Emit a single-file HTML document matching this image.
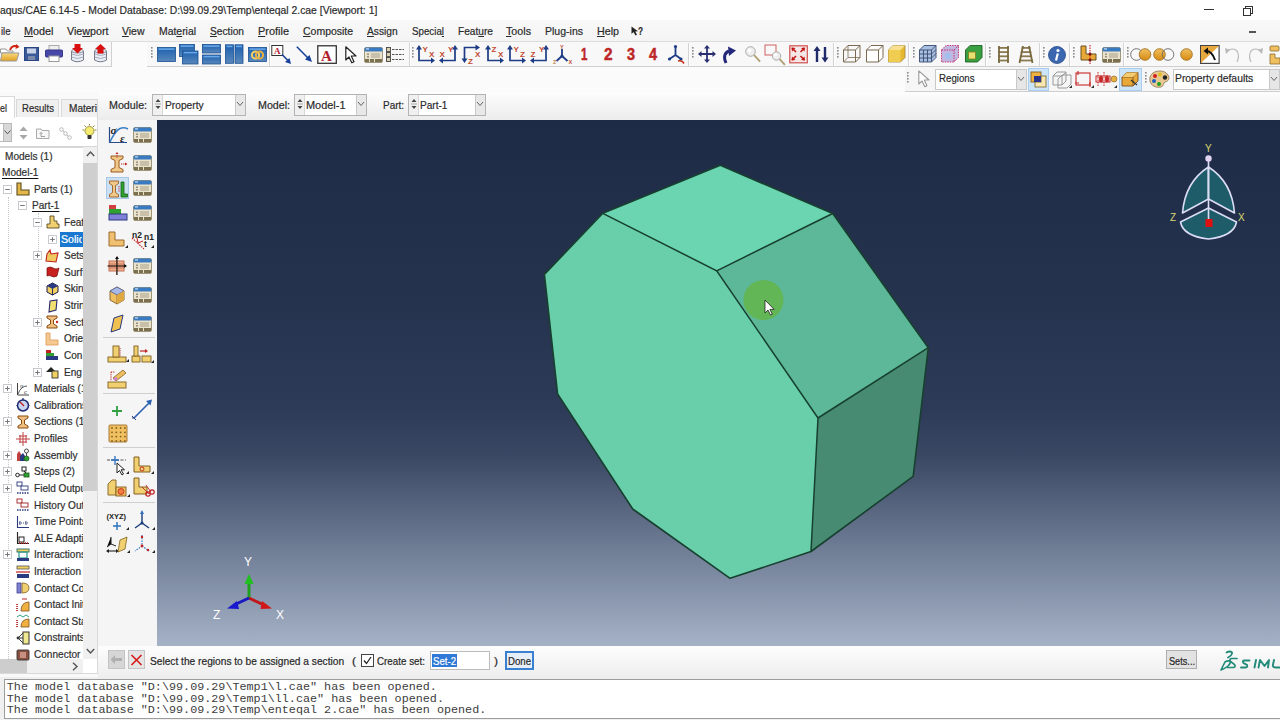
<!DOCTYPE html>
<html><head><meta charset="utf-8">
<style>
*{margin:0;padding:0;box-sizing:border-box}
html,body{width:1280px;height:720px;overflow:hidden;background:#f9f9f9;font-family:"Liberation Sans",sans-serif;font-size:12px;color:#222;position:relative}
.a{position:absolute}
svg.a{overflow:visible}
u{text-decoration:underline;text-underline-offset:0.5px;text-decoration-thickness:1px}
div.a{-webkit-text-stroke:0.2px currentColor}
div.m{-webkit-text-stroke:0}
</style></head><body>
<div class="a" style="left:0px;top:0px;width:1280px;height:21px;background:#fff"></div>
<div class="a" style="left:0.00px;top:3.88px;font-size:11.6px;line-height:11.6px;color:#2a2a2a;font-weight:normal;font-family:'Liberation Sans',sans-serif;white-space:pre;transform:scaleX(0.8956);transform-origin:0 0;">aqus/CAE 6.14-5 - Model Database: D:\99.09.29\Temp\enteqal 2.cae [Viewport: 1]</div>
<div class="a" style="left:1204px;top:9px;width:10px;height:1px;background:#333"></div>
<div class="a" style="left:1245px;top:6px;width:8px;height:8px;border:1px solid #333;background:#fff"></div>
<div class="a" style="left:1243px;top:8px;width:8px;height:8px;border:1px solid #333;background:#fff"></div>
<div class="a" style="left:0px;top:20px;width:1280px;height:21px;background:linear-gradient(#f9f9f9,#f4f4f4)"></div>
<div class="a" style="left:0px;top:41px;width:1280px;height:1px;background:#dcdcdc"></div>
<div class="a" style="left:1249px;top:31px;width:7px;height:1.5px;background:#555"></div>
<div class="a" style="left:0.50px;top:25.86px;font-size:10.8px;line-height:10.8px;color:#2a2a2a;font-weight:normal;font-family:'Liberation Sans',sans-serif;white-space:pre;transform:scaleX(0.8796);transform-origin:0 0;">ile</div>
<div class="a" style="left:24.00px;top:25.86px;font-size:10.8px;line-height:10.8px;color:#2a2a2a;font-weight:normal;font-family:'Liberation Sans',sans-serif;white-space:pre;"><u>M</u>odel</div>
<div class="a" style="left:67.00px;top:25.86px;font-size:10.8px;line-height:10.8px;color:#2a2a2a;font-weight:normal;font-family:'Liberation Sans',sans-serif;white-space:pre;transform:scaleX(0.9916);transform-origin:0 0;">Vie<u>w</u>port</div>
<div class="a" style="left:122.00px;top:25.86px;font-size:10.8px;line-height:10.8px;color:#2a2a2a;font-weight:normal;font-family:'Liberation Sans',sans-serif;white-space:pre;transform:scaleX(0.9690);transform-origin:0 0;"><u>V</u>iew</div>
<div class="a" style="left:159.00px;top:25.86px;font-size:10.8px;line-height:10.8px;color:#2a2a2a;font-weight:normal;font-family:'Liberation Sans',sans-serif;white-space:pre;transform:scaleX(0.9637);transform-origin:0 0;">Mat<u>e</u>rial</div>
<div class="a" style="left:210.00px;top:25.86px;font-size:10.8px;line-height:10.8px;color:#2a2a2a;font-weight:normal;font-family:'Liberation Sans',sans-serif;white-space:pre;transform:scaleX(0.9440);transform-origin:0 0;"><u>S</u>ection</div>
<div class="a" style="left:258.00px;top:25.86px;font-size:10.8px;line-height:10.8px;color:#2a2a2a;font-weight:normal;font-family:'Liberation Sans',sans-serif;white-space:pre;transform:scaleX(1.0125);transform-origin:0 0;"><u>P</u>rofile</div>
<div class="a" style="left:302.80px;top:25.86px;font-size:10.8px;line-height:10.8px;color:#2a2a2a;font-weight:normal;font-family:'Liberation Sans',sans-serif;white-space:pre;transform:scaleX(0.9705);transform-origin:0 0;"><u>C</u>omposite</div>
<div class="a" style="left:367.00px;top:25.86px;font-size:10.8px;line-height:10.8px;color:#2a2a2a;font-weight:normal;font-family:'Liberation Sans',sans-serif;white-space:pre;transform:scaleX(0.9444);transform-origin:0 0;"><u>A</u>ssign</div>
<div class="a" style="left:412.00px;top:25.86px;font-size:10.8px;line-height:10.8px;color:#2a2a2a;font-weight:normal;font-family:'Liberation Sans',sans-serif;white-space:pre;transform:scaleX(0.9033);transform-origin:0 0;">Specia<u>l</u></div>
<div class="a" style="left:458.00px;top:25.86px;font-size:10.8px;line-height:10.8px;color:#2a2a2a;font-weight:normal;font-family:'Liberation Sans',sans-serif;white-space:pre;transform:scaleX(0.9407);transform-origin:0 0;">Feat<u>u</u>re</div>
<div class="a" style="left:506.00px;top:25.86px;font-size:10.8px;line-height:10.8px;color:#2a2a2a;font-weight:normal;font-family:'Liberation Sans',sans-serif;white-space:pre;transform:scaleX(0.9914);transform-origin:0 0;"><u>T</u>ools</div>
<div class="a" style="left:545.00px;top:25.86px;font-size:10.8px;line-height:10.8px;color:#2a2a2a;font-weight:normal;font-family:'Liberation Sans',sans-serif;white-space:pre;transform:scaleX(0.9733);transform-origin:0 0;">Plu<u>g</u>-ins</div>
<div class="a" style="left:597.00px;top:25.86px;font-size:10.8px;line-height:10.8px;color:#2a2a2a;font-weight:normal;font-family:'Liberation Sans',sans-serif;white-space:pre;transform:scaleX(0.9913);transform-origin:0 0;"><u>H</u>elp</div>
<div class="a" style="left:638.00px;top:25.86px;font-size:10.8px;line-height:10.8px;color:#2a2a2a;font-weight:bold;font-family:'Liberation Sans',sans-serif;white-space:pre;transform:scaleX(0.7590);transform-origin:0 0;">?</div>
<svg class="a" style="left:631px;top:26px" width="8" height="10" viewBox="0 0 8 10"><path d="M0.5 0.5 L0.5 8 L2.5 6 L4.5 9.5 L6 8.8 L4.2 5.5 L7 5.3 Z" fill="#222"/></svg>
<div class="a" style="left:0px;top:42px;width:1280px;height:50px;background:#fbfbfb"></div>
<div class="a" style="left:-2px;top:42px;width:114px;height:25px;background:#f8f8f8;border-right:1px solid #d0d0d0;border-bottom:1px solid #cfcfcf"></div>
<div class="a" style="left:147px;top:42px;width:1133px;height:25px;background:#f8f8f8;border-bottom:1px solid #cfcfcf"></div>
<div class="a" style="left:905px;top:67px;width:375px;height:25px;background:#f6f6f6;border-bottom:1px solid #cfcfcf"></div>
<div class="a" style="left:98px;top:92px;width:1182px;height:28px;background:linear-gradient(#fdfdfd,#ececec)"></div>
<div class="a" style="left:109.40px;top:99.86px;font-size:10.8px;line-height:10.8px;color:#2a2a2a;font-weight:normal;font-family:'Liberation Sans',sans-serif;white-space:pre;transform:scaleX(0.9909);transform-origin:0 0;">Module:</div>
<div class="a" style="left:258.00px;top:99.86px;font-size:10.8px;line-height:10.8px;color:#2a2a2a;font-weight:normal;font-family:'Liberation Sans',sans-serif;white-space:pre;transform:scaleX(0.9877);transform-origin:0 0;">Model:</div>
<div class="a" style="left:383.00px;top:99.86px;font-size:10.8px;line-height:10.8px;color:#2a2a2a;font-weight:normal;font-family:'Liberation Sans',sans-serif;white-space:pre;transform:scaleX(0.9215);transform-origin:0 0;">Part:</div>
<div class="a" style="left:152px;top:94px;width:94px;height:22px;background:#fff;border:1px solid #b4b4b4"></div>
<div class="a" style="left:153px;top:95px;width:10px;height:20px;background:#f0f0f0;border-right:1px solid #d8d8d8"></div>
<svg class="a" style="left:155px;top:98px" width="6" height="12" viewBox="0 0 6 12"><path d="M0.5 4 L3 1 L5.5 4 Z M0.5 8 L3 11 L5.5 8 Z" fill="#444"/><line x1="0" y1="6" x2="6" y2="6" stroke="#aaa" stroke-width="1"/></svg>
<div class="a" style="left:235px;top:95px;width:10px;height:20px;background:#e8e8e8;border-left:1px solid #c8c8c8"></div>
<svg class="a" style="left:236px;top:101px" width="8" height="6" viewBox="0 0 8 6"><path d="M1 1 L4 4.5 L7 1" fill="none" stroke="#666" stroke-width="1"/></svg>
<div class="a" style="left:165.00px;top:99.52px;font-size:11.2px;line-height:11.2px;color:#2a2a2a;font-weight:normal;font-family:'Liberation Sans',sans-serif;white-space:pre;transform:scaleX(0.9141);transform-origin:0 0;">Property</div>
<div class="a" style="left:294px;top:94px;width:73px;height:22px;background:#fff;border:1px solid #b4b4b4"></div>
<div class="a" style="left:295px;top:95px;width:10px;height:20px;background:#f0f0f0;border-right:1px solid #d8d8d8"></div>
<svg class="a" style="left:297px;top:98px" width="6" height="12" viewBox="0 0 6 12"><path d="M0.5 4 L3 1 L5.5 4 Z M0.5 8 L3 11 L5.5 8 Z" fill="#444"/><line x1="0" y1="6" x2="6" y2="6" stroke="#aaa" stroke-width="1"/></svg>
<div class="a" style="left:356px;top:95px;width:10px;height:20px;background:#e8e8e8;border-left:1px solid #c8c8c8"></div>
<svg class="a" style="left:357px;top:101px" width="8" height="6" viewBox="0 0 8 6"><path d="M1 1 L4 4.5 L7 1" fill="none" stroke="#666" stroke-width="1"/></svg>
<div class="a" style="left:306.00px;top:99.52px;font-size:11.2px;line-height:11.2px;color:#2a2a2a;font-weight:normal;font-family:'Liberation Sans',sans-serif;white-space:pre;transform:scaleX(0.9781);transform-origin:0 0;">Model-1</div>
<div class="a" style="left:408px;top:94px;width:78px;height:22px;background:#fff;border:1px solid #b4b4b4"></div>
<div class="a" style="left:409px;top:95px;width:10px;height:20px;background:#f0f0f0;border-right:1px solid #d8d8d8"></div>
<svg class="a" style="left:411px;top:98px" width="6" height="12" viewBox="0 0 6 12"><path d="M0.5 4 L3 1 L5.5 4 Z M0.5 8 L3 11 L5.5 8 Z" fill="#444"/><line x1="0" y1="6" x2="6" y2="6" stroke="#aaa" stroke-width="1"/></svg>
<div class="a" style="left:475px;top:95px;width:10px;height:20px;background:#e8e8e8;border-left:1px solid #c8c8c8"></div>
<svg class="a" style="left:476px;top:101px" width="8" height="6" viewBox="0 0 8 6"><path d="M1 1 L4 4.5 L7 1" fill="none" stroke="#666" stroke-width="1"/></svg>
<div class="a" style="left:420.00px;top:99.52px;font-size:11.2px;line-height:11.2px;color:#2a2a2a;font-weight:normal;font-family:'Liberation Sans',sans-serif;white-space:pre;transform:scaleX(0.9010);transform-origin:0 0;">Part-1</div>
<div class="a" style="left:157px;top:120px;width:1123px;height:526px;background:linear-gradient(to bottom,#1e2b47 0%,#25334f 35%,#2d3b58 55%,#3a4864 64%,#6a7891 80%,#a5b2c6 100%)"></div>
<div class="a" style="left:0px;top:117px;width:98px;height:557px;background:#fff;border-right:1px solid #d9d9d9;border-bottom:1px solid #d9d9d9"></div>
<div class="a" style="left:16px;top:99px;width:43px;height:18px;background:#f0f0f0;border:1px solid #d9d9d9;border-bottom:none"></div>
<div class="a" style="left:61px;top:99px;width:37px;height:18px;background:#f0f0f0;border:1px solid #d9d9d9;border-bottom:none"></div>
<div class="a" style="left:-2px;top:96px;width:17px;height:22px;background:#fff;border:1px solid #d9d9d9;border-bottom:none"></div>
<div class="a" style="left:0.00px;top:102.52px;font-size:11.2px;line-height:11.2px;color:#2a2a2a;font-weight:normal;font-family:'Liberation Sans',sans-serif;white-space:pre;transform:scaleX(0.8013);transform-origin:0 0;">el</div>
<div class="a" style="left:22.00px;top:102.52px;font-size:11.2px;line-height:11.2px;color:#2a2a2a;font-weight:normal;font-family:'Liberation Sans',sans-serif;white-space:pre;transform:scaleX(0.8567);transform-origin:0 0;">Results</div>
<div class="a" style="left:69.00px;top:102.52px;font-size:11.2px;line-height:11.2px;color:#2a2a2a;font-weight:normal;font-family:'Liberation Sans',sans-serif;white-space:pre;transform:scaleX(0.8993);transform-origin:0 0;">Materi</div>
<div class="a" style="left:99px;top:120px;width:58px;height:526px;background:#f3f3f3"></div>
<div class="a" style="left:99px;top:646px;width:1181px;height:33px;background:#f3f3f3"></div>
<div class="a" style="left:0px;top:677px;width:1280px;height:43px;background:#f0f0f0"></div>
<div class="a" style="left:4px;top:679px;width:1276px;height:40px;background:#fff;border:1px solid #9c9c9c;border-right:none"></div>
<div class="a m" style="left:6.80px;top:682.29px;font-size:11.75px;line-height:11.75px;color:#3c3c3c;font-weight:normal;font-family:'Liberation Mono',monospace;white-space:pre;">The model database "D:\99.09.29\Temp1\l.cae" has been opened.</div>
<div class="a m" style="left:6.80px;top:693.89px;font-size:11.75px;line-height:11.75px;color:#3c3c3c;font-weight:normal;font-family:'Liberation Mono',monospace;white-space:pre;">The model database "D:\99.09.29\Temp1\ll.cae" has been opened.</div>
<div class="a m" style="left:6.80px;top:705.09px;font-size:11.75px;line-height:11.75px;color:#3c3c3c;font-weight:normal;font-family:'Liberation Mono',monospace;white-space:pre;">The model database "D:\99.09.29\Temp\enteqal 2.cae" has been opened.</div>
<svg class="a" style="left:157px;top:120px" width="1123" height="526" viewBox="0 0 1123 526"><polygon points="445.8,93.3 563.3,45.3 675.7,93.5 559.7,150.8" fill="#6bd5b1"/><polygon points="559.7,150.8 675.7,93.5 771.3,227.7 661.0,298.0" fill="#5db899"/><polygon points="661.0,298.0 771.3,227.7 756.2,356.4 654.0,431.5" fill="#478b72"/><polygon points="445.8,93.3 559.7,150.8 661.0,298.0 654.0,431.5 573.1,458.3 475.7,389.0 400.6,274.0 387.4,154.4" fill="#68cfaa"/><polyline points="387.4,154.4 445.8,93.3 563.3,45.3 675.7,93.5 771.3,227.7 756.2,356.4 654.0,431.5 573.1,458.3 475.7,389.0 400.6,274.0 387.4,154.4" fill="none" stroke="#17402f" stroke-width="1.6" stroke-linejoin="round"/><polyline points="445.8,93.3 559.7,150.8 661.0,298.0 654.0,431.5" fill="none" stroke="#17402f" stroke-width="1.5"/><line x1="559.7" y1="150.8" x2="675.7" y2="93.5" stroke="#17402f" stroke-width="1.5"/><line x1="661" y1="298" x2="771.3" y2="227.7" stroke="#17402f" stroke-width="1.5"/><circle cx="606.5" cy="180" r="20" fill="#64b54f" opacity="0.92"/><path d="M608 180 l0 13 l3 -3 l2.5 5 l1.8 -0.8 l-2.4 -4.8 l4.2 0 z" fill="#fff" stroke="#222" stroke-width="0.8"/></svg>
<svg class="a" style="left:0px;top:0px" width="1" height="1" viewBox="0 0 1 1"><defs><linearGradient id="bw" x1="0" y1="0" x2="0" y2="1"><stop offset="0" stop-color="#1b5fae"/><stop offset="1" stop-color="#5a88bb"/></linearGradient><linearGradient id="yel" x1="0" y1="0" x2="0" y2="1"><stop offset="0" stop-color="#f7d980"/><stop offset="1" stop-color="#e0a020"/></linearGradient><linearGradient id="org" x1="0" y1="0" x2="0" y2="1"><stop offset="0" stop-color="#f0c060"/><stop offset="1" stop-color="#d88a10"/></linearGradient></defs></svg>
<svg class="a" style="left:0px;top:44px" width="20" height="18" viewBox="0 0 20 18"><path d="M0.5 5 L6 5 L7.5 7 L13 7 L13 9 L0.5 9 Z" fill="#fff" stroke="#999" stroke-width="1"/><path d="M2 9 L19 9 L16.5 17 L0.5 17 Z" fill="url(#yel)" stroke="#9a9a9a" stroke-width="1"/><path d="M10 6 Q12 0.5 18 2.5" fill="none" stroke="#d02010" stroke-width="1.8"/><path d="M16 0 L19.5 3 L15.5 5 Z" fill="#d02010"/></svg>
<svg class="a" style="left:24px;top:47px" width="15" height="14" viewBox="0 0 15 14"><rect x="0.5" y="0.5" width="14" height="13" fill="#3a5a98" stroke="#2a4682"/><rect x="3" y="1.5" width="9" height="5" fill="#c8d4e6"/><rect x="4" y="9" width="7" height="4" fill="#7a8aa8"/></svg>
<svg class="a" style="left:45px;top:45px" width="18" height="17" viewBox="0 0 18 17"><rect x="4" y="0.5" width="10" height="5" fill="#eee" stroke="#aaa"/><rect x="0.5" y="5" width="17" height="7" rx="1" fill="#4848a8" stroke="#36368a"/><rect x="4" y="11" width="10" height="5.5" fill="#fff" stroke="#999"/></svg>
<svg class="a" style="left:71px;top:44px" width="14" height="19" viewBox="0 0 14 19"><path d="M0.5 7 L0.5 16 Q6.5 19.5 12.5 16 L12.5 7" fill="#e8eef5" stroke="#778" stroke-width="1"/><path d="M0.5 10 Q6.5 13 12.5 10 M0.5 13 Q6.5 16 12.5 13" fill="none" stroke="#99a" stroke-width="0.8"/><ellipse cx="6.5" cy="7" rx="6" ry="2" fill="#dfe6ee" stroke="#778" stroke-width="0.8"/><path d="M3.5 0 L9.5 0 L9.5 4 L12 4 L6.5 9.5 L1 4 L3.5 4 Z" fill="#d81010"/></svg>
<svg class="a" style="left:94px;top:44px" width="14" height="19" viewBox="0 0 14 19"><path d="M0.5 7 L0.5 16 Q6.5 19.5 12.5 16 L12.5 7" fill="#e8eef5" stroke="#778" stroke-width="1"/><path d="M0.5 10 Q6.5 13 12.5 10 M0.5 13 Q6.5 16 12.5 13" fill="none" stroke="#99a" stroke-width="0.8"/><ellipse cx="6.5" cy="7" rx="6" ry="2" fill="#dfe6ee" stroke="#778" stroke-width="0.8"/><path d="M6.5 0 L12 5 L9.5 5 L9.5 9.5 L3.5 9.5 L3.5 5 L1 5 Z" fill="#d81010"/></svg>
<svg class="a" style="left:151px;top:47px" width="2" height="12" viewBox="0 0 2 12"><rect x="0" y="0" width="1.6" height="1.6" fill="#8a8a8a"/><rect x="0" y="3" width="1.6" height="1.6" fill="#8a8a8a"/><rect x="0" y="6" width="1.6" height="1.6" fill="#8a8a8a"/><rect x="0" y="9" width="1.6" height="1.6" fill="#8a8a8a"/></svg>
<svg class="a" style="left:157px;top:47px" width="19" height="15" viewBox="0 0 19 15"><rect x="0.5" y="0.5" width="18" height="14" fill="url(#bw)" stroke="#1a4f90" stroke-width="0.8"/><rect x="1.5" y="1.3" width="16" height="1.6" fill="#6aa8e8"/></svg>
<svg class="a" style="left:179px;top:44px" width="20" height="21" viewBox="0 0 20 21"><rect x="0.5" y="0.5" width="15" height="12" fill="url(#bw)" stroke="#1a4f90" stroke-width="0.8"/><rect x="1.5" y="1.3" width="13" height="1.6" fill="#6aa8e8"/><rect x="3.5" y="7" width="15.5" height="13" fill="url(#bw)" stroke="#1a4f90" stroke-width="0.8"/><rect x="4.5" y="7.8" width="13.5" height="1.6" fill="#6aa8e8"/></svg>
<svg class="a" style="left:202px;top:44px" width="19" height="21" viewBox="0 0 19 21"><rect x="0.5" y="0.5" width="18" height="8.5" fill="url(#bw)" stroke="#1a4f90" stroke-width="0.8"/><rect x="1.5" y="1.3" width="16" height="1.6" fill="#6aa8e8"/><rect x="0.5" y="11" width="18" height="9" fill="url(#bw)" stroke="#1a4f90" stroke-width="0.8"/><rect x="1.5" y="11.8" width="16" height="1.6" fill="#6aa8e8"/></svg>
<svg class="a" style="left:225px;top:44px" width="19" height="20" viewBox="0 0 19 20"><rect x="0.5" y="0.8" width="8" height="18.5" fill="url(#bw)" stroke="#1a4f90" stroke-width="0.8"/><rect x="1.5" y="1.6" width="6" height="1.6" fill="#6aa8e8"/><rect x="10" y="0.8" width="8" height="18.5" fill="url(#bw)" stroke="#1a4f90" stroke-width="0.8"/><rect x="11" y="1.6" width="6" height="1.6" fill="#6aa8e8"/></svg>
<svg class="a" style="left:248px;top:47px" width="19" height="15" viewBox="0 0 19 15"><rect x="0.5" y="0.5" width="18" height="14" fill="url(#bw)" stroke="#1a4f90" stroke-width="0.8"/><rect x="1.5" y="1.3" width="16" height="1.6" fill="#6aa8e8"/><circle cx="7.5" cy="8" r="3.6" fill="none" stroke="#f5d060" stroke-width="2"/><circle cx="11.5" cy="8" r="3.6" fill="none" stroke="#e8b040" stroke-width="2"/></svg>
<div class="a" style="left:269px;top:43px;width:1px;height:23px;background:#d4d4d4"></div>
<div class="a" style="left:270px;top:43px;width:1px;height:23px;background:#fff"></div>
<svg class="a" style="left:271px;top:45px" width="21" height="20" viewBox="0 0 21 20"><rect x="0.8" y="0.5" width="11" height="10" fill="#fff" stroke="#333" stroke-width="1"/><text x="3" y="9" font-family="Liberation Serif" font-weight="bold" font-size="9" fill="#b02030">A</text><path d="M11 9.5 L17.5 16" stroke="#16409a" stroke-width="1.6"/><path d="M14 17 L20 19 L18.5 13 Z" fill="#16409a"/></svg>
<svg class="a" style="left:296px;top:46px" width="17" height="17" viewBox="0 0 17 17"><path d="M0.8 0.8 L12 12" stroke="#16409a" stroke-width="1.6"/><path d="M9 13.5 L16 16 L13.5 9 Z" fill="#16409a"/></svg>
<svg class="a" style="left:317px;top:45px" width="20" height="19" viewBox="0 0 20 19"><rect x="0.8" y="0.8" width="18.5" height="17.5" fill="#fff" stroke="#333" stroke-width="1.3"/><text x="4" y="15.5" font-family="Liberation Serif" font-weight="bold" font-size="15" fill="#b01c2c">A</text></svg>
<svg class="a" style="left:345px;top:46px" width="13" height="18" viewBox="0 0 13 18"><path d="M0.8 0.8 L0.8 14 L4 11 L6.8 16.8 L9 15.8 L6.3 10 L11 10 Z" fill="#fff" stroke="#222" stroke-width="1.2" stroke-linejoin="round"/></svg>
<svg class="a" style="left:364px;top:47px" width="19" height="16" viewBox="0 0 19 16"><rect x="0.5" y="0.5" width="18" height="15" rx="1.5" fill="#e9e2cc" stroke="#8a8060" stroke-width="0.8"/><rect x="0.5" y="0.5" width="18" height="4" rx="1.5" fill="#3a7ac0"/><rect x="2" y="1.3" width="3" height="1.2" fill="#cde"/><rect x="3" y="6.5" width="2" height="1.5" fill="#9a9080"/><rect x="3" y="9" width="2" height="1.5" fill="#9a9080"/><rect x="7" y="6" width="9" height="5" fill="#c8c0a8"/><rect x="1" y="12" width="17" height="3" fill="#7a7050"/><rect x="5" y="12" width="1" height="3" fill="#e9e2cc"/><rect x="10" y="12" width="1" height="3" fill="#e9e2cc"/></svg>
<svg class="a" style="left:386px;top:47px" width="19" height="15" viewBox="0 0 19 15"><rect x="0.5" y="0.5" width="4" height="4" fill="#d8d0b0" stroke="#444" stroke-width="0.9"/><path d="M6 2.5 L18 2.5" stroke="#555" stroke-width="1" stroke-dasharray="2.5 1"/><rect x="0.5" y="5.5" width="4" height="4" fill="#d8d0b0" stroke="#444" stroke-width="0.9"/><path d="M6 7.5 L18 7.5" stroke="#555" stroke-width="1" stroke-dasharray="2.5 1"/><rect x="0.5" y="10.5" width="4" height="4" fill="#d8d0b0" stroke="#444" stroke-width="0.9"/><path d="M6 12.5 L18 12.5" stroke="#555" stroke-width="1" stroke-dasharray="2.5 1"/></svg>
<div class="a" style="left:409px;top:43px;width:1px;height:23px;background:#d4d4d4"></div>
<div class="a" style="left:410px;top:43px;width:1px;height:23px;background:#fff"></div>
<svg class="a" style="left:412px;top:47px" width="2" height="12" viewBox="0 0 2 12"><rect x="0" y="0" width="1.6" height="1.6" fill="#8a8a8a"/><rect x="0" y="3" width="1.6" height="1.6" fill="#8a8a8a"/><rect x="0" y="6" width="1.6" height="1.6" fill="#8a8a8a"/><rect x="0" y="9" width="1.6" height="1.6" fill="#8a8a8a"/></svg>
<svg class="a" style="left:416px;top:45px" width="19" height="19" viewBox="0 0 19 19"><path d="M3 3 L3 15.5 L17 15.5" fill="none" stroke="#1e3c86" stroke-width="1.7"/><path d="M0 4.5 L3 0 L6 4.5 Z M15 12.5 L19 15.5 L15 18.5 Z" fill="#1e3c86"/><text x="6.5" y="6.5" font-family="Liberation Sans" font-weight="bold" font-size="8" fill="#c04a30">Y</text><text x="13" y="12" font-family="Liberation Sans" font-weight="bold" font-size="8" fill="#c04a30">X</text></svg>
<svg class="a" style="left:439px;top:45px" width="19" height="19" viewBox="0 0 19 19"><path d="M16 3 L16 15.5 L2 15.5" fill="none" stroke="#1e3c86" stroke-width="1.7"/><path d="M13 4.5 L16 0 L19 4.5 Z M4 12.5 L0 15.5 L4 18.5 Z" fill="#1e3c86"/><text x="0.5" y="12" font-family="Liberation Sans" font-weight="bold" font-size="8" fill="#c04a30">X</text><text x="9" y="6.5" font-family="Liberation Sans" font-weight="bold" font-size="8" fill="#c04a30">Y</text></svg>
<svg class="a" style="left:462px;top:45px" width="19" height="19" viewBox="0 0 19 19"><path d="M2.5 15 L2.5 2.5 L15 2.5" fill="none" stroke="#1e3c86" stroke-width="1.7"/><path d="M-0.5 13.5 L2.5 18 L5.5 13.5 Z M13.5 -0.5 L18 2.5 L13.5 5.5 Z" fill="#1e3c86"/><text x="6" y="18.5" font-family="Liberation Sans" font-weight="bold" font-size="8" fill="#c04a30">Z</text><text x="13" y="12" font-family="Liberation Sans" font-weight="bold" font-size="8" fill="#c04a30">X</text></svg>
<svg class="a" style="left:485px;top:45px" width="19" height="19" viewBox="0 0 19 19"><path d="M3 3 L3 15.5 L17 15.5" fill="none" stroke="#1e3c86" stroke-width="1.7"/><path d="M0 4.5 L3 0 L6 4.5 Z M15 12.5 L19 15.5 L15 18.5 Z" fill="#1e3c86"/><text x="6.5" y="6.5" font-family="Liberation Sans" font-weight="bold" font-size="8" fill="#c04a30">Z</text><text x="13" y="12" font-family="Liberation Sans" font-weight="bold" font-size="8" fill="#c04a30">X</text></svg>
<svg class="a" style="left:507px;top:45px" width="19" height="19" viewBox="0 0 19 19"><path d="M3 3 L3 15.5 L17 15.5" fill="none" stroke="#1e3c86" stroke-width="1.7"/><path d="M0 4.5 L3 0 L6 4.5 Z M15 12.5 L19 15.5 L15 18.5 Z" fill="#1e3c86"/><text x="6.5" y="6.5" font-family="Liberation Sans" font-weight="bold" font-size="8" fill="#c04a30">Y</text><text x="13" y="12" font-family="Liberation Sans" font-weight="bold" font-size="8" fill="#c04a30">Z</text></svg>
<svg class="a" style="left:530px;top:45px" width="19" height="19" viewBox="0 0 19 19"><path d="M16 3 L16 15.5 L2 15.5" fill="none" stroke="#1e3c86" stroke-width="1.7"/><path d="M13 4.5 L16 0 L19 4.5 Z M4 12.5 L0 15.5 L4 18.5 Z" fill="#1e3c86"/><text x="0.5" y="12" font-family="Liberation Sans" font-weight="bold" font-size="8" fill="#c04a30">Z</text><text x="9" y="6.5" font-family="Liberation Sans" font-weight="bold" font-size="8" fill="#c04a30">Y</text></svg>
<svg class="a" style="left:553px;top:44px" width="20" height="21" viewBox="0 0 20 21"><path d="M9 5 L9 12 L3.5 17 M9 12 L14.5 17" fill="none" stroke="#1e3c86" stroke-width="1.8"/><circle cx="9" cy="12" r="1.6" fill="#1e3c86"/><text x="7" y="5" font-family="Liberation Sans" font-weight="bold" font-size="5.5" fill="#c04a30">Y</text><text x="0" y="20" font-family="Liberation Sans" font-weight="bold" font-size="5.5" fill="#c08040">Z</text><text x="15.5" y="20" font-family="Liberation Sans" font-weight="bold" font-size="5.5" fill="#c04a30">X</text></svg>
<div class="a" style="left:581.30px;top:45.61px;font-size:17px;line-height:17px;color:#bd2626;font-weight:bold;font-family:'Liberation Sans',sans-serif;white-space:pre;transform:scaleX(0.6783);transform-origin:0 0;-webkit-text-stroke:0.5px #bd2626;">1</div>
<div class="a" style="left:603.50px;top:45.61px;font-size:17px;line-height:17px;color:#bd2626;font-weight:bold;font-family:'Liberation Sans',sans-serif;white-space:pre;transform:scaleX(0.9009);transform-origin:0 0;-webkit-text-stroke:0.5px #bd2626;">2</div>
<div class="a" style="left:626.50px;top:45.61px;font-size:17px;line-height:17px;color:#bd2626;font-weight:bold;font-family:'Liberation Sans',sans-serif;white-space:pre;transform:scaleX(0.8479);transform-origin:0 0;-webkit-text-stroke:0.5px #bd2626;">3</div>
<div class="a" style="left:649.00px;top:45.61px;font-size:17px;line-height:17px;color:#bd2626;font-weight:bold;font-family:'Liberation Sans',sans-serif;white-space:pre;transform:scaleX(0.8479);transform-origin:0 0;-webkit-text-stroke:0.5px #bd2626;">4</div>
<svg class="a" style="left:667px;top:44px" width="20" height="21" viewBox="0 0 20 21"><path d="M8.5 3 L8.5 11 L2.5 15 M8.5 11 L14 15" fill="none" stroke="#1e3c86" stroke-width="1.8"/><circle cx="8.5" cy="2.5" r="1.6" fill="#1e3c86"/><circle cx="2.5" cy="15" r="1.6" fill="#1e3c86"/><circle cx="14" cy="15" r="1.6" fill="#1e3c86"/><path d="M11 17 Q15 16 17 19.5" fill="none" stroke="#c83018" stroke-width="1.6"/></svg>
<div class="a" style="left:688px;top:43px;width:1px;height:23px;background:#d4d4d4"></div>
<div class="a" style="left:689px;top:43px;width:1px;height:23px;background:#fff"></div>
<svg class="a" style="left:692px;top:47px" width="2" height="12" viewBox="0 0 2 12"><rect x="0" y="0" width="1.6" height="1.6" fill="#8a8a8a"/><rect x="0" y="3" width="1.6" height="1.6" fill="#8a8a8a"/><rect x="0" y="6" width="1.6" height="1.6" fill="#8a8a8a"/><rect x="0" y="9" width="1.6" height="1.6" fill="#8a8a8a"/></svg>
<svg class="a" style="left:698px;top:45px" width="19" height="18" viewBox="0 0 19 18"><path d="M9 1.5 L9 16.5 M1.5 9 L16.5 9" stroke="#2a2f70" stroke-width="1.8"/><path d="M9 0 L12 3.5 L6 3.5 Z M9 18 L12 14.5 L6 14.5 Z M0 9 L3.5 6 L3.5 12 Z M18 9 L14.5 6 L14.5 12 Z" fill="#2a2f70"/></svg>
<svg class="a" style="left:722px;top:46px" width="15" height="18" viewBox="0 0 15 18"><path d="M4 17 Q0 8 7 5" fill="none" stroke="#24287a" stroke-width="3"/><path d="M6 0.5 L14 4.5 L7 10 Z" fill="#24287a"/></svg>
<svg class="a" style="left:744px;top:45px" width="18" height="19" viewBox="0 0 18 19"><line x1="9.86" y1="9.86" x2="16.1" y2="16.58" stroke="#b0a070" stroke-width="1.8"/><circle cx="6.5" cy="6.5" r="4.8" fill="#eee" stroke="#aaa" stroke-width="1"/><circle cx="5.5" cy="5.5" r="1.92" fill="#fff"/></svg>
<svg class="a" style="left:764px;top:44px" width="22" height="20" viewBox="0 0 22 20"><rect x="1" y="1" width="11" height="10" fill="none" stroke="#d06060" stroke-width="1"/><line x1="15.44" y1="14.94" x2="20.9" y2="20.82" stroke="#b0a070" stroke-width="1.8"/><circle cx="12.5" cy="12" r="4.2" fill="#eee" stroke="#aaa" stroke-width="1"/><circle cx="11.5" cy="11" r="1.6800000000000002" fill="#fff"/></svg>
<svg class="a" style="left:789px;top:45px" width="19" height="19" viewBox="0 0 19 19"><rect x="0.8" y="0.8" width="17.5" height="17" fill="#f6e6e6" stroke="#d05050" stroke-width="1.2"/><path d="M3 3 L7 7 M15.5 3 L11.5 7 M3 15 L7 11 M15.5 15 L11.5 11" stroke="#c01818" stroke-width="1.6"/><path d="M2.5 2.5 L6.5 3 L3 6.5 Z M16 2.5 L12 3 L15.5 6.5 Z M2.5 15.5 L6.5 15 L3 11.5 Z M16 15.5 L12 15 L15.5 11.5 Z" fill="#c01818"/></svg>
<svg class="a" style="left:813px;top:46px" width="16" height="18" viewBox="0 0 16 18"><path d="M4 3.5 L4 16" stroke="#202a6a" stroke-width="2.4"/><path d="M0.5 5 L4 0 L7.5 5 Z" fill="#202a6a"/><path d="M12 1 L12 13" stroke="#202a6a" stroke-width="2.4"/><path d="M8.5 11.5 L12 16.5 L15.5 11.5 Z" fill="#202a6a"/></svg>
<div class="a" style="left:833px;top:43px;width:1px;height:23px;background:#d4d4d4"></div>
<div class="a" style="left:834px;top:43px;width:1px;height:23px;background:#fff"></div>
<svg class="a" style="left:836.5px;top:47px" width="2" height="12" viewBox="0 0 2 12"><rect x="0" y="0" width="1.6" height="1.6" fill="#8a8a8a"/><rect x="0" y="3" width="1.6" height="1.6" fill="#8a8a8a"/><rect x="0" y="6" width="1.6" height="1.6" fill="#8a8a8a"/><rect x="0" y="9" width="1.6" height="1.6" fill="#8a8a8a"/></svg>
<svg class="a" style="left:843px;top:45px" width="18" height="18" viewBox="0 0 18 18"><path d="M0.5 5 L5 0.5 L17 0.5 L17 12.5 L12.5 17 L0.5 17 Z M0.5 5 L12.5 5 L17 0.5 M12.5 5 L12.5 17" fill="none" stroke="#7a6a50" stroke-width="1"/><path d="M5 0.5 L5 12.5 L17 12.5 M5 12.5 L0.5 17" fill="none" stroke="#7a6a50" stroke-width="0.8"/></svg>
<svg class="a" style="left:866px;top:45px" width="18" height="18" viewBox="0 0 18 18"><path d="M0.5 5 L5 0.5 L17 0.5 L17 12.5 L12.5 17 L0.5 17 Z M0.5 5 L12.5 5 L17 0.5 M12.5 5 L12.5 17" fill="#fff" stroke="#7a6a50" stroke-width="1"/></svg>
<svg class="a" style="left:888px;top:45px" width="18" height="18" viewBox="0 0 18 18"><path d="M0.5 5 L5 0.5 L17 0.5 L17 12.5 L12.5 17 L0.5 17 Z" fill="#e6b830" stroke="#9a8040" stroke-width="0.8"/><path d="M0.5 5 L12.5 5 L12.5 17 L0.5 17 Z" fill="#f0cc50"/><path d="M0.5 5 L5 0.5 L17 0.5 L12.5 5 Z" fill="#f8e090"/></svg>
<div class="a" style="left:908px;top:43px;width:1px;height:23px;background:#d4d4d4"></div>
<div class="a" style="left:909px;top:43px;width:1px;height:23px;background:#fff"></div>
<svg class="a" style="left:913px;top:47px" width="2" height="12" viewBox="0 0 2 12"><rect x="0" y="0" width="1.6" height="1.6" fill="#8a8a8a"/><rect x="0" y="3" width="1.6" height="1.6" fill="#8a8a8a"/><rect x="0" y="6" width="1.6" height="1.6" fill="#8a8a8a"/><rect x="0" y="9" width="1.6" height="1.6" fill="#8a8a8a"/></svg>
<svg class="a" style="left:919px;top:45px" width="18" height="18" viewBox="0 0 18 18"><path d="M0.5 5 L5 0.5 L17 0.5 L17 12.5 L12.5 17 L0.5 17 Z" fill="#a8c0e0" stroke="#3a4a70" stroke-width="0.9"/><path d="M0.5 5 L12.5 5 L17 0.5 M12.5 5 L12.5 17 M4.5 5 L4.5 17 M8.5 5 L8.5 17 M0.5 9 L12.5 9 M0.5 13 L12.5 13 M12.5 9 L17 4.5 M12.5 13 L17 8.5" fill="none" stroke="#3a4a70" stroke-width="0.9"/></svg>
<svg class="a" style="left:941px;top:45px" width="19" height="18" viewBox="0 0 19 18"><path d="M0.5 5 L5 0.5 L17.5 0.5 L17.5 12.5 L13 17 L0.5 17 Z" fill="#c0b8e0" stroke="#c83878" stroke-width="1" stroke-dasharray="1.5 1"/><path d="M0.5 5 L13 5 L17.5 0.5 M13 5 L13 17" fill="none" stroke="#c83878" stroke-width="1" stroke-dasharray="1.5 1"/><circle cx="7" cy="11" r="3" fill="#a0c0f0"/></svg>
<svg class="a" style="left:965px;top:45px" width="18" height="18" viewBox="0 0 18 18"><path d="M0.5 5 L5 0.5 L17 0.5 L17 12.5 L12.5 17 L0.5 17 Z" fill="#38a040" stroke="#206020" stroke-width="0.9"/><rect x="3.5" y="7" width="7" height="7" fill="#e8e070" stroke="#808020" stroke-width="0.8"/></svg>
<div class="a" style="left:985px;top:43px;width:1px;height:23px;background:#d4d4d4"></div>
<div class="a" style="left:986px;top:43px;width:1px;height:23px;background:#fff"></div>
<svg class="a" style="left:989px;top:47px" width="2" height="12" viewBox="0 0 2 12"><rect x="0" y="0" width="1.6" height="1.6" fill="#8a8a8a"/><rect x="0" y="3" width="1.6" height="1.6" fill="#8a8a8a"/><rect x="0" y="6" width="1.6" height="1.6" fill="#8a8a8a"/><rect x="0" y="9" width="1.6" height="1.6" fill="#8a8a8a"/></svg>
<svg class="a" style="left:997px;top:46px" width="14" height="18" viewBox="0 0 14 18"><rect x="1" y="1.0" width="11" height="1.8" fill="#8a7a50"/><rect x="1" y="5.2" width="11" height="1.8" fill="#8a7a50"/><rect x="1" y="9.4" width="11" height="1.8" fill="#8a7a50"/><rect x="1" y="13.600000000000001" width="11" height="1.8" fill="#8a7a50"/><path d="M2 0 L2 17 M11 0 L11 17" stroke="#7a6a40" stroke-width="1.8"/></svg>
<svg class="a" style="left:1018px;top:46px" width="16" height="18" viewBox="0 0 16 18"><rect x="3.5" y="1.0" width="9.0" height="1.8" fill="#8a7a50"/><rect x="2.7" y="5.2" width="10.6" height="1.8" fill="#8a7a50"/><rect x="1.9" y="9.4" width="12.2" height="1.8" fill="#8a7a50"/><rect x="1.0999999999999996" y="13.600000000000001" width="13.8" height="1.8" fill="#8a7a50"/><path d="M5 0 L1.5 17 M11 0 L14.5 17" stroke="#7a6a40" stroke-width="1.8"/></svg>
<div class="a" style="left:1039px;top:43px;width:1px;height:23px;background:#d4d4d4"></div>
<div class="a" style="left:1040px;top:43px;width:1px;height:23px;background:#fff"></div>
<svg class="a" style="left:1043px;top:47px" width="2" height="12" viewBox="0 0 2 12"><rect x="0" y="0" width="1.6" height="1.6" fill="#8a8a8a"/><rect x="0" y="3" width="1.6" height="1.6" fill="#8a8a8a"/><rect x="0" y="6" width="1.6" height="1.6" fill="#8a8a8a"/><rect x="0" y="9" width="1.6" height="1.6" fill="#8a8a8a"/></svg>
<svg class="a" style="left:1048px;top:46px" width="19" height="19" viewBox="0 0 19 19"><circle cx="9" cy="9" r="8.5" fill="#3b67b0" stroke="#2a4a88" stroke-width="0.8"/><circle cx="10" cy="4.5" r="1.6" fill="#fff"/><path d="M9.8 7.5 L8 14.5" stroke="#fff" stroke-width="2.2"/></svg>
<div class="a" style="left:1069px;top:43px;width:1px;height:23px;background:#d4d4d4"></div>
<div class="a" style="left:1070px;top:43px;width:1px;height:23px;background:#fff"></div>
<svg class="a" style="left:1073px;top:47px" width="2" height="12" viewBox="0 0 2 12"><rect x="0" y="0" width="1.6" height="1.6" fill="#8a8a8a"/><rect x="0" y="3" width="1.6" height="1.6" fill="#8a8a8a"/><rect x="0" y="6" width="1.6" height="1.6" fill="#8a8a8a"/><rect x="0" y="9" width="1.6" height="1.6" fill="#8a8a8a"/></svg>
<svg class="a" style="left:1080px;top:45px" width="18" height="20" viewBox="0 0 18 20"><path d="M1 1 L6 1 L6 9 L16 9 L16 15 L1 15 Z" fill="#e8a838" stroke="#6a5020" stroke-width="1"/><path d="M10 0 L10 20" stroke="#c01010" stroke-width="1" stroke-dasharray="1.5 1"/><circle cx="10" cy="9" r="1.5" fill="#801010"/><circle cx="10" cy="15" r="1.5" fill="#801010"/></svg>
<svg class="a" style="left:1102px;top:47px" width="19" height="16" viewBox="0 0 19 16"><rect x="0.5" y="0.5" width="18" height="15" rx="1.5" fill="#e9e2cc" stroke="#8a8060" stroke-width="0.8"/><rect x="0.5" y="0.5" width="18" height="4" rx="1.5" fill="#3a7ac0"/><rect x="2" y="1.3" width="3" height="1.2" fill="#cde"/><rect x="3" y="6.5" width="2" height="1.5" fill="#9a9080"/><rect x="3" y="9" width="2" height="1.5" fill="#9a9080"/><rect x="7" y="6" width="9" height="5" fill="#c8c0a8"/><rect x="1" y="12" width="17" height="3" fill="#7a7050"/><rect x="5" y="12" width="1" height="3" fill="#e9e2cc"/><rect x="10" y="12" width="1" height="3" fill="#e9e2cc"/></svg>
<div class="a" style="left:1123px;top:43px;width:1px;height:23px;background:#d4d4d4"></div>
<div class="a" style="left:1124px;top:43px;width:1px;height:23px;background:#fff"></div>
<svg class="a" style="left:1127px;top:47px" width="2" height="12" viewBox="0 0 2 12"><rect x="0" y="0" width="1.6" height="1.6" fill="#8a8a8a"/><rect x="0" y="3" width="1.6" height="1.6" fill="#8a8a8a"/><rect x="0" y="6" width="1.6" height="1.6" fill="#8a8a8a"/><rect x="0" y="9" width="1.6" height="1.6" fill="#8a8a8a"/></svg>
<svg class="a" style="left:1130px;top:48px" width="22" height="13" viewBox="0 0 22 13"><circle cx="6.5" cy="6.5" r="5.8" fill="none" stroke="#666" stroke-width="0.9"/><circle cx="15" cy="6.5" r="5.8" fill="url(#org)" stroke="#a07020" stroke-width="0.9"/></svg>
<svg class="a" style="left:1153px;top:48px" width="22" height="13" viewBox="0 0 22 13"><circle cx="6.5" cy="6.5" r="5.8" fill="url(#org)" stroke="#a07020" stroke-width="0.9"/><circle cx="15" cy="6.5" r="5.8" fill="none" stroke="#666" stroke-width="0.9"/></svg>
<svg class="a" style="left:1180px;top:48px" width="14" height="14" viewBox="0 0 14 14"><circle cx="6.5" cy="6.5" r="5.8" fill="url(#org)" stroke="#a07020" stroke-width="0.9"/></svg>
<svg class="a" style="left:1200px;top:45px" width="20" height="19" viewBox="0 0 20 19"><rect x="0.6" y="0.6" width="18.5" height="17.8" fill="#fff" stroke="#444" stroke-width="1.2"/><path d="M1 1 L19 1 L1 18 Z" fill="#e8a840"/><path d="M15 15 Q12 6 6 6" fill="none" stroke="#111" stroke-width="2"/><path d="M3.5 6 L8 2.5 L8 9.5 Z" fill="#111"/></svg>
<svg class="a" style="left:1224px;top:46px" width="17" height="18" viewBox="0 0 17 18"><path d="M3 5 Q9 1 13 5 Q16 10 13 16" fill="none" stroke="#b8b8b8" stroke-width="1.2"/><path d="M1 2 L6 4 L2 8 Z" fill="#b8b8b8"/></svg>
<svg class="a" style="left:1247px;top:46px" width="17" height="18" viewBox="0 0 17 18"><path d="M14 5 Q8 1 4 5 Q1 10 4 16" fill="none" stroke="#b8b8b8" stroke-width="1.2"/><path d="M16 2 L11 4 L15 8 Z" fill="#b8b8b8"/></svg>
<svg class="a" style="left:1269px;top:45px" width="12" height="20" viewBox="0 0 12 20"><rect x="1" y="1" width="9" height="5" rx="1" fill="#f0c060" stroke="#8a6a30" stroke-width="0.8"/><path d="M1 9 L6 9 L6 13 L11 13 L11 19 L1 19 Z" fill="#f0c060" stroke="#8a6a30" stroke-width="0.8"/></svg>
<svg class="a" style="left:907px;top:72px" width="2" height="12" viewBox="0 0 2 12"><rect x="0" y="0" width="1.6" height="1.6" fill="#8a8a8a"/><rect x="0" y="3" width="1.6" height="1.6" fill="#8a8a8a"/><rect x="0" y="6" width="1.6" height="1.6" fill="#8a8a8a"/><rect x="0" y="9" width="1.6" height="1.6" fill="#8a8a8a"/></svg>
<svg class="a" style="left:918px;top:70px" width="14" height="19" viewBox="0 0 14 19"><path d="M0.8 0.8 L0.8 14 L4 11 L6.8 16.8 L9 15.8 L6.3 10 L11 10 Z" fill="#fff" stroke="#9a9a9a" stroke-width="1.1" stroke-linejoin="round"/></svg>
<div class="a" style="left:935px;top:69px;width:92px;height:21px;background:#fff;border:1px solid #c8c8c8"></div>
<div class="a" style="left:1016px;top:70px;width:10px;height:19px;background:#e6e6e6;border-left:1px solid #c8c8c8"></div>
<svg class="a" style="left:1017px;top:76px" width="8" height="6" viewBox="0 0 8 6"><path d="M1 1 L4 4.5 L7 1" fill="none" stroke="#666" stroke-width="1"/></svg>
<div class="a" style="left:938.60px;top:73.35px;font-size:11.4px;line-height:11.4px;color:#2a2a2a;font-weight:normal;font-family:'Liberation Sans',sans-serif;white-space:pre;transform:scaleX(0.8509);transform-origin:0 0;">Regions</div>
<div class="a" style="left:1028px;top:68px;width:21px;height:23px;background:#cce4f7;border:1px solid #a8cdef"></div>
<svg class="a" style="left:1030px;top:71px" width="17" height="17" viewBox="0 0 17 17"><rect x="5" y="5" width="11" height="11" fill="#f8e8b0" stroke="#807040" stroke-width="0.9"/><rect x="1" y="1" width="10" height="10" fill="#f0b040" stroke="#806020" stroke-width="0.9"/><rect x="4" y="5" width="7" height="6" fill="#28348a"/></svg>
<svg class="a" style="left:1052px;top:70px" width="20" height="20" viewBox="0 0 20 20"><path d="M1 6 L5 2 L14 2 L14 11 L10 15 L1 15 Z M1 6 L10 6 L14 2 M10 6 L10 15" fill="#f4f4f4" stroke="#999" stroke-width="1"/><path d="M6 9 L10 5 L19 5 L19 14 L15 18 L6 18 Z" fill="none" stroke="#999" stroke-width="1"/><path d="M17 18 L20 18 L20 15 Z" fill="#333"/></svg>
<svg class="a" style="left:1074px;top:70px" width="20" height="20" viewBox="0 0 20 20"><rect x="2" y="3" width="14" height="12" fill="none" stroke="#c82828" stroke-width="1.1"/><path d="M4 1 L4 5 M1 13 L5 13 M16 12 L16 17" stroke="#c82828" stroke-width="1.1"/><path d="M17 18 L20 18 L20 15 Z" fill="#333"/></svg>
<svg class="a" style="left:1095px;top:70px" width="23" height="20" viewBox="0 0 23 20"><path d="M3 2 L3 17 M9 2 L9 17" stroke="#c82828" stroke-width="1" stroke-dasharray="1.5 1"/><rect x="1" y="6" width="14" height="6" fill="none" stroke="#c82828" stroke-width="1"/><ellipse cx="6" cy="9" rx="2" ry="3.5" fill="#c82828"/><ellipse cx="12" cy="9" rx="2" ry="3.5" fill="#c82828"/><circle cx="19" cy="9" r="3" fill="#e8b040" stroke="#806020" stroke-width="0.6"/><path d="M19 18 L22 18 L22 15 Z" fill="#333"/></svg>
<div class="a" style="left:1119px;top:68px;width:23px;height:23px;background:#cce4f7;border:1px solid #a8cdef"></div>
<svg class="a" style="left:1121px;top:71px" width="19" height="17" viewBox="0 0 19 17"><path d="M1 6 L6 1.5 L17 1.5 L17 10 L12 15 L1 15 Z" fill="#e8a838" stroke="#805020" stroke-width="0.9"/><path d="M1 6 L12 6 L17 1.5 M12 6 L12 15" fill="none" stroke="#805020" stroke-width="0.9"/><path d="M1 6 L6 1.5 L17 1.5 L12 6 Z" fill="#f4cc70"/><path d="M10 9 L16 14" stroke="#333" stroke-width="1.3"/></svg>
<svg class="a" style="left:1145px;top:72px" width="2" height="12" viewBox="0 0 2 12"><rect x="0" y="0" width="1.6" height="1.6" fill="#8a8a8a"/><rect x="0" y="3" width="1.6" height="1.6" fill="#8a8a8a"/><rect x="0" y="6" width="1.6" height="1.6" fill="#8a8a8a"/><rect x="0" y="9" width="1.6" height="1.6" fill="#8a8a8a"/></svg>
<svg class="a" style="left:1149px;top:70px" width="22" height="19" viewBox="0 0 22 19"><path d="M11 1 C3 1 0 6 1 11 C2 16 7 18 12 17 C15 16 14 13 16 12 C20 11 21 8 19 5 C17 2 14 1 11 1 Z" fill="#e8c890" stroke="#8a7050" stroke-width="0.8"/><circle cx="6" cy="6" r="2" fill="#d02020"/><circle cx="11" cy="4.5" r="2" fill="#e0c020"/><circle cx="5" cy="11" r="2" fill="#2060c0"/><circle cx="10" cy="14" r="2" fill="#20a020"/><circle cx="16" cy="7.5" r="2.2" fill="#222"/></svg>
<div class="a" style="left:1173px;top:69px;width:107px;height:21px;background:#fff;border:1px solid #c8c8c8"></div>
<div class="a" style="left:1269px;top:70px;width:10px;height:19px;background:#e6e6e6;border-left:1px solid #c8c8c8"></div>
<svg class="a" style="left:1270px;top:76px" width="8" height="6" viewBox="0 0 8 6"><path d="M1 1 L4 4.5 L7 1" fill="none" stroke="#666" stroke-width="1"/></svg>
<div class="a" style="left:1175.40px;top:73.35px;font-size:11.4px;line-height:11.4px;color:#2a2a2a;font-weight:normal;font-family:'Liberation Sans',sans-serif;white-space:pre;transform:scaleX(0.9085);transform-origin:0 0;">Property defaults</div>
<div class="a" style="left:0px;top:123px;width:12px;height:19px;background:#fff;border:1px solid #b8b8b8;border-left:none"></div>
<div class="a" style="left:3px;top:124px;width:8px;height:17px;background:#d8d8d8;border-left:1px solid #bbb"></div>
<svg class="a" style="left:4px;top:130px" width="7" height="5" viewBox="0 0 7 5"><path d="M0.5 0.5 L3.5 3.8 L6.5 0.5" fill="none" stroke="#555" stroke-width="1"/></svg>
<svg class="a" style="left:19px;top:126px" width="9" height="14" viewBox="0 0 9 14"><path d="M4.5 0.5 L8.5 5 L0.5 5 Z M4.5 13.5 L8.5 9 L0.5 9 Z" fill="#a8a8a8"/></svg>
<svg class="a" style="left:36px;top:127px" width="14" height="12" viewBox="0 0 14 12"><path d="M0.5 2 L5 2 L6 3.5 L13 3.5 L13 11.5 L0.5 11.5 Z" fill="#f6f6f6" stroke="#a0a0a0" stroke-width="0.9"/><path d="M5 5.5 L5 9.5 L9 9.5 M3.5 7 L5 5.5 L6.5 7" fill="none" stroke="#999" stroke-width="0.9"/></svg>
<svg class="a" style="left:59px;top:127px" width="13" height="13" viewBox="0 0 13 13"><circle cx="2.5" cy="2.5" r="1.8" fill="#fff" stroke="#aaa" stroke-width="0.8"/><circle cx="6.5" cy="6.5" r="1.8" fill="#fff" stroke="#aaa" stroke-width="0.8"/><circle cx="10.5" cy="10.5" r="1.8" fill="#fff" stroke="#aaa" stroke-width="0.8"/><path d="M3.5 3.5 L5.5 5.5 M7.5 7.5 L9.5 9.5" stroke="#aaa" stroke-width="0.8"/></svg>
<svg class="a" style="left:82px;top:124px" width="15" height="17" viewBox="0 0 15 17"><path d="M0.5 6 L2.5 6 M12.5 6 L14.5 6 M2.5 1.5 L4 3 M12.5 1.5 L11 3 M7.5 0 L7.5 1.5" stroke="#8a8a30" stroke-width="1"/><circle cx="7.5" cy="7" r="4.5" fill="#f4ec70" stroke="#9a9040" stroke-width="0.9"/><rect x="5.5" y="11" width="4" height="4" rx="1" fill="#333"/></svg>
<div class="a" style="left:0px;top:146px;width:97px;height:2px;background:#d6d6d6"></div>
<div class="a" style="left:83px;top:147px;width:14px;height:512px;background:#f0f0f0"></div>
<div class="a" style="left:83px;top:163px;width:14px;height:328px;background:#cfcfcf"></div>
<svg class="a" style="left:86px;top:151px" width="9" height="6" viewBox="0 0 9 6"><path d="M0.8 5 L4.5 1 L8.2 5" fill="none" stroke="#555" stroke-width="1.4"/></svg>
<svg class="a" style="left:86px;top:648px" width="9" height="6" viewBox="0 0 9 6"><path d="M0.8 1 L4.5 5 L8.2 1" fill="none" stroke="#555" stroke-width="1.4"/></svg>
<div class="a" style="left:0px;top:659px;width:83px;height:14px;background:#f0f0f0"></div>
<div class="a" style="left:0px;top:659px;width:27px;height:14px;background:#cdcdcd"></div>
<svg class="a" style="left:72px;top:662px" width="6" height="9" viewBox="0 0 6 9"><path d="M1 0.8 L5 4.5 L1 8.2" fill="none" stroke="#555" stroke-width="1.4"/></svg>
<div class="a" style="left:8px;top:197px;width:1px;height:462px;border-left:1px dotted #c8c8c8"></div>
<div class="a" style="left:38px;top:213px;width:1px;height:160px;border-left:1px dotted #c8c8c8"></div>
<div class="a" style="left:5px;top:149.50px;width:78px;height:15px;overflow:hidden;color:#2e2e2e"><div style="font-size:10.6px;line-height:13px;white-space:pre;transform:scaleX(0.95);transform-origin:0 0">Models (1)</div></div>
<div class="a" style="left:2px;top:166.12px;width:81px;height:15px;overflow:hidden;color:#2e2e2e"><div style="font-size:10.6px;line-height:13px;white-space:pre;transform:scaleX(0.95);transform-origin:0 0"><span style="text-decoration:underline;text-underline-offset:2px;text-decoration-thickness:1.3px;text-decoration-color:#111">Model-1</span></div></div>
<svg class="a" style="left:3px;top:184.74px" width="9" height="9" viewBox="0 0 9 9"><rect x="0.5" y="0.5" width="8" height="8" fill="#fff" stroke="#c4c4cc" stroke-width="0.9"/><path d="M2.2 4.5 L6.8 4.5" stroke="#777" stroke-width="1"/></svg>
<div class="a" style="left:34px;top:182.74px;width:49px;height:15px;overflow:hidden;color:#2e2e2e"><div style="font-size:10.6px;line-height:13px;white-space:pre;transform:scaleX(0.95);transform-origin:0 0">Parts (1)</div></div>
<svg class="a" style="left:16px;top:182.24px" width="14" height="14" viewBox="0 0 14 14"><path d="M1 1 L5 1 L5 8 L13 8 L13 13 L1 13 Z" fill="#e4b848" stroke="#5a4a20" stroke-width="1.1"/></svg>
<svg class="a" style="left:18px;top:201.36px" width="9" height="9" viewBox="0 0 9 9"><rect x="0.5" y="0.5" width="8" height="8" fill="#fff" stroke="#c4c4cc" stroke-width="0.9"/><path d="M2.2 4.5 L6.8 4.5" stroke="#777" stroke-width="1"/></svg>
<div class="a" style="left:32px;top:199.36px;width:51px;height:15px;overflow:hidden;color:#2e2e2e"><div style="font-size:10.6px;line-height:13px;white-space:pre;transform:scaleX(0.95);transform-origin:0 0"><span style="text-decoration:underline;text-underline-offset:2px;text-decoration-thickness:1.3px;text-decoration-color:#111">Part-1</span></div></div>
<svg class="a" style="left:33px;top:217.98000000000002px" width="9" height="9" viewBox="0 0 9 9"><rect x="0.5" y="0.5" width="8" height="8" fill="#fff" stroke="#c4c4cc" stroke-width="0.9"/><path d="M2.2 4.5 L6.8 4.5" stroke="#777" stroke-width="1"/></svg>
<div class="a" style="left:64px;top:215.98px;width:19px;height:15px;overflow:hidden;color:#2e2e2e"><div style="font-size:10.6px;line-height:13px;white-space:pre;transform:scaleX(0.95);transform-origin:0 0">Feat</div></div>
<svg class="a" style="left:46px;top:215.48000000000002px" width="14" height="14" viewBox="0 0 14 14"><path d="M4 1 L8 1 L8 6 L11 6 L11 9 L13 9 L13 13 L1 13 L1 9 L4 9 Z" fill="#f0d070" stroke="#5a4a20" stroke-width="0.9"/></svg>
<svg class="a" style="left:48px;top:234.60000000000002px" width="9" height="9" viewBox="0 0 9 9"><rect x="0.5" y="0.5" width="8" height="8" fill="#fff" stroke="#c4c4cc" stroke-width="0.9"/><path d="M2.2 4.5 L6.8 4.5" stroke="#777" stroke-width="1"/><path d="M4.5 2.2 L4.5 6.8" stroke="#777" stroke-width="1"/></svg>
<div class="a" style="left:60px;top:231.60000000000002px;width:23px;height:15px;background:#1b78d0"></div>
<div class="a" style="left:61px;top:232.60px;width:21px;height:15px;overflow:hidden;font-size:10.6px;line-height:13px;color:#fff;white-space:pre">Solid</div>
<svg class="a" style="left:33px;top:251.22px" width="9" height="9" viewBox="0 0 9 9"><rect x="0.5" y="0.5" width="8" height="8" fill="#fff" stroke="#c4c4cc" stroke-width="0.9"/><path d="M2.2 4.5 L6.8 4.5" stroke="#777" stroke-width="1"/><path d="M4.5 2.2 L4.5 6.8" stroke="#777" stroke-width="1"/></svg>
<div class="a" style="left:64px;top:249.22px;width:19px;height:15px;overflow:hidden;color:#2e2e2e"><div style="font-size:10.6px;line-height:13px;white-space:pre;transform:scaleX(0.95);transform-origin:0 0">Sets</div></div>
<svg class="a" style="left:45px;top:248.72px" width="14" height="14" viewBox="0 0 14 14"><path d="M2 5 L5 1 L6 5 L13 4 L11 13 L1 12 Z" fill="#f0c860" stroke="#c02020" stroke-width="1.1"/></svg>
<div class="a" style="left:64px;top:265.84px;width:19px;height:15px;overflow:hidden;color:#2e2e2e"><div style="font-size:10.6px;line-height:13px;white-space:pre;transform:scaleX(0.95);transform-origin:0 0">Surf</div></div>
<svg class="a" style="left:46px;top:265.34000000000003px" width="14" height="14" viewBox="0 0 14 14"><path d="M1 3 Q4 1 7 3 Q10 5 13 3 L11 11 Q8 13 5 11 Q3 10 1 11 Z" fill="#c82020" stroke="#701010" stroke-width="0.7"/></svg>
<div class="a" style="left:64px;top:282.46px;width:19px;height:15px;overflow:hidden;color:#2e2e2e"><div style="font-size:10.6px;line-height:13px;white-space:pre;transform:scaleX(0.95);transform-origin:0 0">Skin</div></div>
<svg class="a" style="left:46px;top:281.96000000000004px" width="14" height="14" viewBox="0 0 14 14"><path d="M6.5 1 L12 4 L12 10 L6.5 13 L1 10 L1 4 Z" fill="#f0d060" stroke="#1a1a50" stroke-width="1"/><path d="M1 4 L6.5 7 L12 4 L6.5 1 Z" fill="#2a3a80"/><path d="M6.5 7 L6.5 13" stroke="#1a1a50" stroke-width="0.9"/></svg>
<div class="a" style="left:64px;top:299.08px;width:19px;height:15px;overflow:hidden;color:#2e2e2e"><div style="font-size:10.6px;line-height:13px;white-space:pre;transform:scaleX(0.95);transform-origin:0 0">String</div></div>
<svg class="a" style="left:46px;top:298.58000000000004px" width="14" height="14" viewBox="0 0 14 14"><path d="M4 2 L11 1 L10 11 L3 13 Z" fill="#f0e070" stroke="#2a2a70" stroke-width="1.1"/></svg>
<svg class="a" style="left:33px;top:317.70000000000005px" width="9" height="9" viewBox="0 0 9 9"><rect x="0.5" y="0.5" width="8" height="8" fill="#fff" stroke="#c4c4cc" stroke-width="0.9"/><path d="M2.2 4.5 L6.8 4.5" stroke="#777" stroke-width="1"/><path d="M4.5 2.2 L4.5 6.8" stroke="#777" stroke-width="1"/></svg>
<div class="a" style="left:64px;top:315.70px;width:19px;height:15px;overflow:hidden;color:#2e2e2e"><div style="font-size:10.6px;line-height:13px;white-space:pre;transform:scaleX(0.95);transform-origin:0 0">Sect</div></div>
<svg class="a" style="left:45px;top:315.20000000000005px" width="14" height="14" viewBox="0 0 14 14"><path d="M2 1 L12 1 L12 3 L8.5 5 L8.5 9 L12 11 L12 13 L2 13 L2 11 L5.5 9 L5.5 5 L2 3 Z" fill="#f0c080" stroke="#8a4a10" stroke-width="1"/><circle cx="12" cy="7" r="1.2" fill="#d02020"/></svg>
<div class="a" style="left:64px;top:332.32px;width:19px;height:15px;overflow:hidden;color:#2e2e2e"><div style="font-size:10.6px;line-height:13px;white-space:pre;transform:scaleX(0.95);transform-origin:0 0">Orie</div></div>
<svg class="a" style="left:45px;top:331.82000000000005px" width="14" height="14" viewBox="0 0 14 14"><path d="M1 1 L5 1 L5 8 L13 8 L13 13 L1 13 Z" fill="#f4c890" stroke="#e0a060" stroke-width="0.9"/></svg>
<div class="a" style="left:64px;top:348.94px;width:19px;height:15px;overflow:hidden;color:#2e2e2e"><div style="font-size:10.6px;line-height:13px;white-space:pre;transform:scaleX(0.95);transform-origin:0 0">Con</div></div>
<svg class="a" style="left:45px;top:348.44px" width="14" height="14" viewBox="0 0 14 14"><rect x="1" y="2" width="5" height="3" fill="#c02020"/><rect x="1" y="5" width="8" height="3" fill="#30a030"/><rect x="1" y="8" width="12" height="4" fill="#2a3a80"/></svg>
<svg class="a" style="left:33px;top:367.56px" width="9" height="9" viewBox="0 0 9 9"><rect x="0.5" y="0.5" width="8" height="8" fill="#fff" stroke="#c4c4cc" stroke-width="0.9"/><path d="M2.2 4.5 L6.8 4.5" stroke="#777" stroke-width="1"/><path d="M4.5 2.2 L4.5 6.8" stroke="#777" stroke-width="1"/></svg>
<div class="a" style="left:64px;top:365.56px;width:19px;height:15px;overflow:hidden;color:#2e2e2e"><div style="font-size:10.6px;line-height:13px;white-space:pre;transform:scaleX(0.95);transform-origin:0 0">Eng</div></div>
<svg class="a" style="left:45px;top:365.06px" width="14" height="14" viewBox="0 0 14 14"><path d="M1 7 L6 2 L10 6 L10 7 Z" fill="#222"/><rect x="7" y="6" width="6" height="7" fill="#f0d060" stroke="#333" stroke-width="0.9"/></svg>
<svg class="a" style="left:3px;top:384.18px" width="9" height="9" viewBox="0 0 9 9"><rect x="0.5" y="0.5" width="8" height="8" fill="#fff" stroke="#c4c4cc" stroke-width="0.9"/><path d="M2.2 4.5 L6.8 4.5" stroke="#777" stroke-width="1"/><path d="M4.5 2.2 L4.5 6.8" stroke="#777" stroke-width="1"/></svg>
<div class="a" style="left:34px;top:382.18px;width:49px;height:15px;overflow:hidden;color:#2e2e2e"><div style="font-size:10.6px;line-height:13px;white-space:pre;transform:scaleX(0.95);transform-origin:0 0">Materials (1)</div></div>
<svg class="a" style="left:16px;top:381.68px" width="14" height="14" viewBox="0 0 14 14"><path d="M1.5 1 L1.5 13 L13 13" fill="none" stroke="#444" stroke-width="1"/><path d="M2 12 Q5 4 11 4" fill="none" stroke="#444" stroke-width="0.9"/><text x="4" y="6" font-size="6" font-family="Liberation Serif" fill="#333">σ</text><text x="8" y="12" font-size="7" font-family="Liberation Serif" fill="#333">c</text></svg>
<div class="a" style="left:34px;top:398.80px;width:49px;height:15px;overflow:hidden;color:#2e2e2e"><div style="font-size:10.6px;line-height:13px;white-space:pre;transform:scaleX(0.95);transform-origin:0 0">Calibrations</div></div>
<svg class="a" style="left:16px;top:398.3px" width="14" height="14" viewBox="0 0 14 14"><circle cx="7" cy="7.5" r="5.5" fill="#c8d4f0" stroke="#1a2a70" stroke-width="1.5"/><path d="M4 4 L8 8" stroke="#c02020" stroke-width="1.2"/><path d="M7 0 L7 2 M0.5 7.5 L1.5 7.5 M12.5 7.5 L13.5 7.5" stroke="#1a2a70" stroke-width="1.2"/></svg>
<svg class="a" style="left:3px;top:417.42px" width="9" height="9" viewBox="0 0 9 9"><rect x="0.5" y="0.5" width="8" height="8" fill="#fff" stroke="#c4c4cc" stroke-width="0.9"/><path d="M2.2 4.5 L6.8 4.5" stroke="#777" stroke-width="1"/><path d="M4.5 2.2 L4.5 6.8" stroke="#777" stroke-width="1"/></svg>
<div class="a" style="left:34px;top:415.42px;width:49px;height:15px;overflow:hidden;color:#2e2e2e"><div style="font-size:10.6px;line-height:13px;white-space:pre;transform:scaleX(0.95);transform-origin:0 0">Sections (1)</div></div>
<svg class="a" style="left:16px;top:414.92px" width="14" height="14" viewBox="0 0 14 14"><path d="M2 1 L12 1 L12 3 L8.5 5 L8.5 9 L12 11 L12 13 L2 13 L2 11 L5.5 9 L5.5 5 L2 3 Z" fill="#f0c080" stroke="#8a4a10" stroke-width="1"/></svg>
<div class="a" style="left:34px;top:432.04px;width:49px;height:15px;overflow:hidden;color:#2e2e2e"><div style="font-size:10.6px;line-height:13px;white-space:pre;transform:scaleX(0.95);transform-origin:0 0">Profiles</div></div>
<svg class="a" style="left:16px;top:431.54px" width="14" height="14" viewBox="0 0 14 14"><path d="M7 0 L7 14 M0 7 L14 7 M4 3 L4 11 M10 3 L10 11 M3 4 L11 4 M3 10 L11 10" stroke="#c04040" stroke-width="1"/></svg>
<svg class="a" style="left:3px;top:450.66px" width="9" height="9" viewBox="0 0 9 9"><rect x="0.5" y="0.5" width="8" height="8" fill="#fff" stroke="#c4c4cc" stroke-width="0.9"/><path d="M2.2 4.5 L6.8 4.5" stroke="#777" stroke-width="1"/><path d="M4.5 2.2 L4.5 6.8" stroke="#777" stroke-width="1"/></svg>
<div class="a" style="left:34px;top:448.66px;width:49px;height:15px;overflow:hidden;color:#2e2e2e"><div style="font-size:10.6px;line-height:13px;white-space:pre;transform:scaleX(0.95);transform-origin:0 0">Assembly</div></div>
<svg class="a" style="left:16px;top:448.16px" width="14" height="14" viewBox="0 0 14 14"><path d="M1 13 L1 6 L3 3 L5 6 L5 13 Z" fill="#c04040"/><path d="M4 13 L4 8 L7 5 L9 8 L9 13 Z" fill="#2a3a80"/><circle cx="10.5" cy="3" r="2" fill="none" stroke="#333" stroke-width="0.9"/><circle cx="10.5" cy="10.5" r="2.5" fill="#30a030" stroke="#1a5a1a" stroke-width="0.8"/><path d="M10.5 5 L10.5 8" stroke="#333" stroke-width="0.9"/></svg>
<svg class="a" style="left:3px;top:467.28000000000003px" width="9" height="9" viewBox="0 0 9 9"><rect x="0.5" y="0.5" width="8" height="8" fill="#fff" stroke="#c4c4cc" stroke-width="0.9"/><path d="M2.2 4.5 L6.8 4.5" stroke="#777" stroke-width="1"/><path d="M4.5 2.2 L4.5 6.8" stroke="#777" stroke-width="1"/></svg>
<div class="a" style="left:34px;top:465.28px;width:49px;height:15px;overflow:hidden;color:#2e2e2e"><div style="font-size:10.6px;line-height:13px;white-space:pre;transform:scaleX(0.95);transform-origin:0 0">Steps (2)</div></div>
<svg class="a" style="left:15px;top:464.78000000000003px" width="14" height="14" viewBox="0 0 14 14"><circle cx="2.5" cy="10" r="1.8" fill="none" stroke="#222" stroke-width="1"/><rect x="7" y="2" width="4" height="4" fill="none" stroke="#222" stroke-width="1"/><rect x="9" y="8" width="5" height="4" fill="#30a030" stroke="#1a5a1a" stroke-width="0.8"/><path d="M4.3 10 L9 10 M9 6 L11 8" stroke="#222" stroke-width="1"/></svg>
<svg class="a" style="left:3px;top:483.90000000000003px" width="9" height="9" viewBox="0 0 9 9"><rect x="0.5" y="0.5" width="8" height="8" fill="#fff" stroke="#c4c4cc" stroke-width="0.9"/><path d="M2.2 4.5 L6.8 4.5" stroke="#777" stroke-width="1"/><path d="M4.5 2.2 L4.5 6.8" stroke="#777" stroke-width="1"/></svg>
<div class="a" style="left:34px;top:481.90px;width:49px;height:15px;overflow:hidden;color:#2e2e2e"><div style="font-size:10.6px;line-height:13px;white-space:pre;transform:scaleX(0.95);transform-origin:0 0">Field Output Requests</div></div>
<svg class="a" style="left:16px;top:481.40000000000003px" width="14" height="14" viewBox="0 0 14 14"><rect x="1" y="1" width="5" height="4" fill="#fff" stroke="#2a3a80" stroke-width="0.9"/><rect x="5" y="5" width="7" height="4" fill="#fff" stroke="#2a3a80" stroke-width="0.9"/><path d="M1 12 L13 12" stroke="#2a3a80" stroke-width="1.6" stroke-dasharray="1.5 1"/></svg>
<div class="a" style="left:34px;top:498.52px;width:49px;height:15px;overflow:hidden;color:#2e2e2e"><div style="font-size:10.6px;line-height:13px;white-space:pre;transform:scaleX(0.95);transform-origin:0 0">History Output</div></div>
<svg class="a" style="left:16px;top:498.02000000000004px" width="14" height="14" viewBox="0 0 14 14"><rect x="1" y="1" width="5" height="4" fill="#fff" stroke="#a02020" stroke-width="0.9"/><rect x="5" y="5" width="7" height="4" fill="#fff" stroke="#a02020" stroke-width="0.9"/><path d="M1 12 L13 12" stroke="#2a3a80" stroke-width="1.6" stroke-dasharray="1.5 1"/></svg>
<div class="a" style="left:34px;top:515.14px;width:49px;height:15px;overflow:hidden;color:#2e2e2e"><div style="font-size:10.6px;line-height:13px;white-space:pre;transform:scaleX(0.95);transform-origin:0 0">Time Points</div></div>
<svg class="a" style="left:16px;top:514.6400000000001px" width="14" height="14" viewBox="0 0 14 14"><path d="M1.5 1 L1.5 12.5 L13 12.5" fill="none" stroke="#2a3a80" stroke-width="1.1"/><path d="M3 8 L12 8" stroke="#2a3a80" stroke-width="0.9" stroke-dasharray="1 1"/><path d="M4 6 L4 10 M10 6 L10 10" stroke="#2a3a80" stroke-width="0.9"/></svg>
<div class="a" style="left:34px;top:531.76px;width:49px;height:15px;overflow:hidden;color:#2e2e2e"><div style="font-size:10.6px;line-height:13px;white-space:pre;transform:scaleX(0.95);transform-origin:0 0">ALE Adaptive</div></div>
<svg class="a" style="left:16px;top:531.26px" width="14" height="14" viewBox="0 0 14 14"><path d="M1.5 1 L1.5 12.5 L13 12.5" fill="none" stroke="#222" stroke-width="1.1"/><rect x="3" y="6" width="5" height="5" fill="none" stroke="#222" stroke-width="1"/><path d="M3 12 L13 12" stroke="#c02020" stroke-width="1.4" stroke-dasharray="1 1"/></svg>
<svg class="a" style="left:3px;top:550.38px" width="9" height="9" viewBox="0 0 9 9"><rect x="0.5" y="0.5" width="8" height="8" fill="#fff" stroke="#c4c4cc" stroke-width="0.9"/><path d="M2.2 4.5 L6.8 4.5" stroke="#777" stroke-width="1"/><path d="M4.5 2.2 L4.5 6.8" stroke="#777" stroke-width="1"/></svg>
<div class="a" style="left:34px;top:548.38px;width:49px;height:15px;overflow:hidden;color:#2e2e2e"><div style="font-size:10.6px;line-height:13px;white-space:pre;transform:scaleX(0.95);transform-origin:0 0">Interactions</div></div>
<svg class="a" style="left:16px;top:547.88px" width="14" height="14" viewBox="0 0 14 14"><rect x="1" y="1" width="12" height="3" fill="#f0d060" stroke="#2a6a60" stroke-width="0.9"/><rect x="3" y="4" width="8" height="6" fill="none" stroke="#2a9a90" stroke-width="1.2"/><rect x="1" y="10" width="12" height="3" fill="#2a3a80"/></svg>
<div class="a" style="left:34px;top:565.00px;width:49px;height:15px;overflow:hidden;color:#2e2e2e"><div style="font-size:10.6px;line-height:13px;white-space:pre;transform:scaleX(0.95);transform-origin:0 0">Interaction Properties</div></div>
<svg class="a" style="left:16px;top:564.5px" width="14" height="14" viewBox="0 0 14 14"><rect x="1" y="1" width="12" height="3" fill="#f0d060" stroke="#555" stroke-width="0.8"/><path d="M0 7 L14 7" stroke="#c02020" stroke-width="1.2"/><rect x="1" y="9" width="12" height="4" fill="#2a3a80"/></svg>
<div class="a" style="left:34px;top:581.62px;width:49px;height:15px;overflow:hidden;color:#2e2e2e"><div style="font-size:10.6px;line-height:13px;white-space:pre;transform:scaleX(0.95);transform-origin:0 0">Contact Controls</div></div>
<svg class="a" style="left:16px;top:581.12px" width="14" height="14" viewBox="0 0 14 14"><rect x="1" y="2" width="4" height="10" fill="#8080d0" stroke="#404090" stroke-width="0.8"/><path d="M6 2 Q13 2 13 7 Q13 12 6 12 Z" fill="#f0d070" stroke="#806020" stroke-width="0.8"/></svg>
<div class="a" style="left:34px;top:598.24px;width:49px;height:15px;overflow:hidden;color:#2e2e2e"><div style="font-size:10.6px;line-height:13px;white-space:pre;transform:scaleX(0.95);transform-origin:0 0">Contact Initializations</div></div>
<svg class="a" style="left:16px;top:597.74px" width="14" height="14" viewBox="0 0 14 14"><path d="M1 13 L1 5" stroke="#c04040" stroke-width="2" stroke-dasharray="1 1"/><path d="M5 13 Q5 4 13 4 L13 13 Z" fill="#f0b040" stroke="#805020" stroke-width="0.8"/><path d="M6 1 L11 1" stroke="#c02020" stroke-width="1"/></svg>
<div class="a" style="left:34px;top:614.86px;width:49px;height:15px;overflow:hidden;color:#2e2e2e"><div style="font-size:10.6px;line-height:13px;white-space:pre;transform:scaleX(0.95);transform-origin:0 0">Contact Stabilizations</div></div>
<svg class="a" style="left:16px;top:614.36px" width="14" height="14" viewBox="0 0 14 14"><path d="M1 3 L4 1 L7 3 L10 1 L13 3" fill="none" stroke="#30a080" stroke-width="1"/><path d="M1 13 L1 6" stroke="#c04040" stroke-width="2" stroke-dasharray="1 1"/><path d="M5 13 Q5 5 13 5 L13 13 Z" fill="#f0b040" stroke="#805020" stroke-width="0.8"/></svg>
<div class="a" style="left:34px;top:631.48px;width:49px;height:15px;overflow:hidden;color:#2e2e2e"><div style="font-size:10.6px;line-height:13px;white-space:pre;transform:scaleX(0.95);transform-origin:0 0">Constraints</div></div>
<svg class="a" style="left:16px;top:630.98px" width="14" height="14" viewBox="0 0 14 14"><rect x="7" y="1" width="6" height="12" fill="#f0e890" stroke="#333" stroke-width="1"/><path d="M7 2 L2 7 L7 12 M2 7 L7 7" fill="none" stroke="#333" stroke-width="1"/><circle cx="2" cy="7" r="1.4" fill="#333"/></svg>
<div class="a" style="left:34px;top:648.10px;width:49px;height:15px;overflow:hidden;color:#2e2e2e"><div style="font-size:10.6px;line-height:13px;white-space:pre;transform:scaleX(0.95);transform-origin:0 0">Connector Sections</div></div>
<svg class="a" style="left:16px;top:647.6px" width="14" height="14" viewBox="0 0 14 14"><rect x="1" y="2" width="12" height="10" rx="1" fill="#8a5040" stroke="#333" stroke-width="0.9"/><rect x="4" y="4" width="6" height="6" fill="#c89080"/></svg>
<div class="a" style="left:98px;top:120px;width:59px;height:526px;background:#f5f5f5"></div>
<svg class="a" style="left:133px;top:127px" width="19" height="16" viewBox="0 0 19 16"><rect x="0.5" y="0.5" width="18" height="15" rx="1.5" fill="#e9e2cc" stroke="#8a8060" stroke-width="0.8"/><rect x="0.5" y="0.5" width="18" height="4" rx="1.5" fill="#3a7ac0"/><rect x="2" y="1.3" width="3" height="1.2" fill="#cde"/><rect x="3" y="6.5" width="2" height="1.5" fill="#9a9080"/><rect x="3" y="9" width="2" height="1.5" fill="#9a9080"/><rect x="7" y="6" width="9" height="5" fill="#c8c0a8"/><rect x="1" y="12" width="17" height="3" fill="#7a7050"/><rect x="5" y="12" width="1" height="3" fill="#e9e2cc"/><rect x="10" y="12" width="1" height="3" fill="#e9e2cc"/></svg>
<svg class="a" style="left:133px;top:155px" width="19" height="16" viewBox="0 0 19 16"><rect x="0.5" y="0.5" width="18" height="15" rx="1.5" fill="#e9e2cc" stroke="#8a8060" stroke-width="0.8"/><rect x="0.5" y="0.5" width="18" height="4" rx="1.5" fill="#3a7ac0"/><rect x="2" y="1.3" width="3" height="1.2" fill="#cde"/><rect x="3" y="6.5" width="2" height="1.5" fill="#9a9080"/><rect x="3" y="9" width="2" height="1.5" fill="#9a9080"/><rect x="7" y="6" width="9" height="5" fill="#c8c0a8"/><rect x="1" y="12" width="17" height="3" fill="#7a7050"/><rect x="5" y="12" width="1" height="3" fill="#e9e2cc"/><rect x="10" y="12" width="1" height="3" fill="#e9e2cc"/></svg>
<svg class="a" style="left:133px;top:180px" width="19" height="16" viewBox="0 0 19 16"><rect x="0.5" y="0.5" width="18" height="15" rx="1.5" fill="#e9e2cc" stroke="#8a8060" stroke-width="0.8"/><rect x="0.5" y="0.5" width="18" height="4" rx="1.5" fill="#3a7ac0"/><rect x="2" y="1.3" width="3" height="1.2" fill="#cde"/><rect x="3" y="6.5" width="2" height="1.5" fill="#9a9080"/><rect x="3" y="9" width="2" height="1.5" fill="#9a9080"/><rect x="7" y="6" width="9" height="5" fill="#c8c0a8"/><rect x="1" y="12" width="17" height="3" fill="#7a7050"/><rect x="5" y="12" width="1" height="3" fill="#e9e2cc"/><rect x="10" y="12" width="1" height="3" fill="#e9e2cc"/></svg>
<svg class="a" style="left:133px;top:205px" width="19" height="16" viewBox="0 0 19 16"><rect x="0.5" y="0.5" width="18" height="15" rx="1.5" fill="#e9e2cc" stroke="#8a8060" stroke-width="0.8"/><rect x="0.5" y="0.5" width="18" height="4" rx="1.5" fill="#3a7ac0"/><rect x="2" y="1.3" width="3" height="1.2" fill="#cde"/><rect x="3" y="6.5" width="2" height="1.5" fill="#9a9080"/><rect x="3" y="9" width="2" height="1.5" fill="#9a9080"/><rect x="7" y="6" width="9" height="5" fill="#c8c0a8"/><rect x="1" y="12" width="17" height="3" fill="#7a7050"/><rect x="5" y="12" width="1" height="3" fill="#e9e2cc"/><rect x="10" y="12" width="1" height="3" fill="#e9e2cc"/></svg>
<svg class="a" style="left:133px;top:258px" width="19" height="16" viewBox="0 0 19 16"><rect x="0.5" y="0.5" width="18" height="15" rx="1.5" fill="#e9e2cc" stroke="#8a8060" stroke-width="0.8"/><rect x="0.5" y="0.5" width="18" height="4" rx="1.5" fill="#3a7ac0"/><rect x="2" y="1.3" width="3" height="1.2" fill="#cde"/><rect x="3" y="6.5" width="2" height="1.5" fill="#9a9080"/><rect x="3" y="9" width="2" height="1.5" fill="#9a9080"/><rect x="7" y="6" width="9" height="5" fill="#c8c0a8"/><rect x="1" y="12" width="17" height="3" fill="#7a7050"/><rect x="5" y="12" width="1" height="3" fill="#e9e2cc"/><rect x="10" y="12" width="1" height="3" fill="#e9e2cc"/></svg>
<svg class="a" style="left:133px;top:287px" width="19" height="16" viewBox="0 0 19 16"><rect x="0.5" y="0.5" width="18" height="15" rx="1.5" fill="#e9e2cc" stroke="#8a8060" stroke-width="0.8"/><rect x="0.5" y="0.5" width="18" height="4" rx="1.5" fill="#3a7ac0"/><rect x="2" y="1.3" width="3" height="1.2" fill="#cde"/><rect x="3" y="6.5" width="2" height="1.5" fill="#9a9080"/><rect x="3" y="9" width="2" height="1.5" fill="#9a9080"/><rect x="7" y="6" width="9" height="5" fill="#c8c0a8"/><rect x="1" y="12" width="17" height="3" fill="#7a7050"/><rect x="5" y="12" width="1" height="3" fill="#e9e2cc"/><rect x="10" y="12" width="1" height="3" fill="#e9e2cc"/></svg>
<svg class="a" style="left:133px;top:316px" width="19" height="16" viewBox="0 0 19 16"><rect x="0.5" y="0.5" width="18" height="15" rx="1.5" fill="#e9e2cc" stroke="#8a8060" stroke-width="0.8"/><rect x="0.5" y="0.5" width="18" height="4" rx="1.5" fill="#3a7ac0"/><rect x="2" y="1.3" width="3" height="1.2" fill="#cde"/><rect x="3" y="6.5" width="2" height="1.5" fill="#9a9080"/><rect x="3" y="9" width="2" height="1.5" fill="#9a9080"/><rect x="7" y="6" width="9" height="5" fill="#c8c0a8"/><rect x="1" y="12" width="17" height="3" fill="#7a7050"/><rect x="5" y="12" width="1" height="3" fill="#e9e2cc"/><rect x="10" y="12" width="1" height="3" fill="#e9e2cc"/></svg>
<svg class="a" style="left:108px;top:125px" width="21" height="19" viewBox="0 0 21 19"><path d="M1.5 2 L1.5 17.5 L19 17.5" fill="none" stroke="#2a4a8a" stroke-width="1.2"/><path d="M2 17 Q7 6 12 3.5 Q16 2 20 4" fill="none" stroke="#3a80c8" stroke-width="1.5"/><text x="2.5" y="8.5" font-size="11" font-style="italic" font-weight="bold" font-family="Liberation Serif" fill="#1a1a1a">σ</text><text x="12" y="16.5" font-size="11" font-style="italic" font-weight="bold" font-family="Liberation Serif" fill="#1a1a1a">ε</text></svg>
<svg class="a" style="left:109px;top:153px" width="19" height="20" viewBox="0 0 19 20"><g transform="translate(0,2)"><path d="M2 1 L14 1 L14 3.5 L10 5.5 L10 12.5 L14 14.5 L14 17 L2 17 L2 14.5 L6 12.5 L6 5.5 L2 3.5 Z" fill="#f0c888" stroke="#9a5a20" stroke-width="1"/></g><path d="M8 0 L8 5 M12 11 L17 11" stroke="#c02020" stroke-width="1" stroke-dasharray="1.2 1"/><path d="M6.5 1 L8 -1 L9.5 1 Z M16 9.5 L18.5 11 L16 12.5 Z" fill="#c02020"/></svg>
<div class="a" style="left:106px;top:177px;width:23px;height:22px;background:#cce0f4;border:1px solid #a8c8ea"></div>
<svg class="a" style="left:108px;top:179px" width="20" height="19" viewBox="0 0 20 19"><g transform="translate(0,1) scale(0.75,1)"><path d="M2 1 L14 1 L14 3.5 L10 5.5 L10 12.5 L14 14.5 L14 17 L2 17 L2 14.5 L6 12.5 L6 5.5 L2 3.5 Z" fill="#f0c888" stroke="#9a5a20" stroke-width="1"/></g><path d="M13 3 L16 3 L16 15 L19.5 15 L19.5 18 L13 18 Z" fill="#30a030" stroke="#1a601a" stroke-width="0.8"/><path d="M11 7 L11 13" stroke="#c02020" stroke-width="1" stroke-dasharray="1.2 1"/></svg>
<svg class="a" style="left:108px;top:204px" width="20" height="17" viewBox="0 0 20 17"><rect x="1" y="1" width="7" height="4" fill="#d04040"/><rect x="1" y="5" width="12" height="5" fill="#30a030"/><rect x="1" y="10" width="18" height="6" fill="#8080d8" stroke="#2a3a80" stroke-width="1"/></svg>
<svg class="a" style="left:108px;top:231px" width="20" height="18" viewBox="0 0 20 18"><path d="M1 1 L7 1 L7 9 L16 9 L16 15 L1 15 Z" fill="#f0c070" stroke="#9a6a30" stroke-width="1"/><path d="M17 17 L20 17 L20 14 Z" fill="#222"/></svg>
<svg class="a" style="left:131px;top:230px" width="23" height="20" viewBox="0 0 23 20"><text x="1" y="7.5" font-size="8.5" font-weight="bold" font-family="Liberation Sans" fill="#222">n2</text><text x="13" y="10" font-size="8.5" font-weight="bold" font-family="Liberation Sans" fill="#222">n1</text><text x="13" y="17" font-size="8.5" font-weight="bold" font-family="Liberation Sans" fill="#222">t</text><path d="M1 8 L13 19" stroke="#c02020" stroke-width="1.1" stroke-dasharray="1.5 1"/><path d="M7 13 L6 8 M7 13 L12 11" stroke="#c02020" stroke-width="1"/><path d="M20 18 L23 18 L23 15 Z" fill="#222"/></svg>
<svg class="a" style="left:107px;top:256px" width="21" height="20" viewBox="0 0 21 20"><rect x="2" y="5" width="15" height="10" fill="#f0b090" stroke="#c07050" stroke-width="1"/><path d="M9.5 1 L9.5 19 M0 10 L19 10 M2 8 L17 8 M2 12 L17 12" stroke="#c07050" stroke-width="0.9"/><path d="M10 1 L10 19 M1 10 L19 10" stroke="#111" stroke-width="1.1"/><path d="M8 3 L10 0 L12 3 Z M17 8 L20 10 L17 12 Z" fill="#111"/></svg>
<svg class="a" style="left:109px;top:286px" width="16" height="19" viewBox="0 0 16 19"><path d="M8 1 L15 5 L15 14 L8 18 L1 14 L1 5 Z" fill="#f0c060" stroke="#806030" stroke-width="0.9"/><path d="M1 5 L8 9 L15 5 L8 1 Z" fill="#a8b8e8" stroke="#506090" stroke-width="0.8"/><path d="M8 9 L8 18" stroke="#806030" stroke-width="0.8"/><path d="M8 9 L15 5 L15 14 L8 18 Z" fill="#e0a840"/></svg>
<svg class="a" style="left:110px;top:314px" width="14" height="19" viewBox="0 0 14 19"><path d="M4 4 L13 1 L10 15 L1 18 Z" fill="#f0c050" stroke="#2a3a80" stroke-width="1"/></svg>
<div class="a" style="left:103px;top:337px;width:52px;height:1px;background:#cfcfcf"></div>
<svg class="a" style="left:107px;top:344px" width="22" height="20" viewBox="0 0 22 20"><rect x="1" y="13" width="18" height="5" fill="#f0d070" stroke="#806020" stroke-width="0.9"/><rect x="6" y="2" width="6" height="11" fill="#f0d070" stroke="#806020" stroke-width="0.9"/><path d="M13 4 L13 12" stroke="#c02020" stroke-width="1" stroke-dasharray="1.2 1"/><path d="M19 18 L22 18 L22 15 Z" fill="#222"/></svg>
<svg class="a" style="left:131px;top:344px" width="23" height="20" viewBox="0 0 23 20"><rect x="1" y="12" width="8" height="6" fill="#f0d070" stroke="#806020" stroke-width="0.9"/><rect x="3" y="2" width="4" height="10" fill="#f0d070" stroke="#806020" stroke-width="0.9"/><rect x="11" y="12" width="9" height="6" fill="#f0d070" stroke="#806020" stroke-width="0.9"/><path d="M9 7 L15 7" stroke="#c02020" stroke-width="1.2"/><path d="M14 5 L17 7 L14 9 Z" fill="#c02020"/><path d="M20 19 L23 19 L23 16 Z" fill="#222"/></svg>
<svg class="a" style="left:107px;top:368px" width="22" height="21" viewBox="0 0 22 21"><rect x="1" y="14" width="18" height="6" fill="#f0d070" stroke="#806020" stroke-width="0.9"/><path d="M6 10 L16 2 L19 5 L9 13 Z" fill="#f0c060" stroke="#806020" stroke-width="0.8"/><path d="M6 11 L9 9 L11 11 L8 13 Z" fill="#d080d0"/><path d="M4 4 L4 13 M4 4 L8 4" stroke="#c02020" stroke-width="1" stroke-dasharray="1.2 1"/></svg>
<div class="a" style="left:103px;top:393px;width:52px;height:1px;background:#cfcfcf"></div>
<svg class="a" style="left:111px;top:405px" width="12" height="12" viewBox="0 0 12 12"><path d="M6 1 L6 11 M1 6 L11 6" stroke="#30a040" stroke-width="1.8"/></svg>
<svg class="a" style="left:132px;top:399px" width="21" height="21" viewBox="0 0 21 21"><path d="M2 19 L17 4" stroke="#2a60b0" stroke-width="1.6"/><path d="M14 2 L20 0.5 L18.5 6.5 Z" fill="#2a60b0"/><path d="M0 17 L4 21 M2 19 L0 19" stroke="#2a3a80" stroke-width="1"/></svg>
<svg class="a" style="left:108px;top:424px" width="20" height="19" viewBox="0 0 20 19"><rect x="1" y="1" width="18" height="17" rx="1" fill="#f0c060" stroke="#a07030" stroke-width="0.9"/><circle cx="4.0" cy="4.0" r="0.9" fill="#806020"/><circle cx="4.0" cy="8.3" r="0.9" fill="#806020"/><circle cx="4.0" cy="12.6" r="0.9" fill="#806020"/><circle cx="4.0" cy="16.9" r="0.9" fill="#806020"/><circle cx="8.3" cy="4.0" r="0.9" fill="#806020"/><circle cx="8.3" cy="8.3" r="0.9" fill="#806020"/><circle cx="8.3" cy="12.6" r="0.9" fill="#806020"/><circle cx="8.3" cy="16.9" r="0.9" fill="#806020"/><circle cx="12.6" cy="4.0" r="0.9" fill="#806020"/><circle cx="12.6" cy="8.3" r="0.9" fill="#806020"/><circle cx="12.6" cy="12.6" r="0.9" fill="#806020"/><circle cx="12.6" cy="16.9" r="0.9" fill="#806020"/><circle cx="16.9" cy="4.0" r="0.9" fill="#806020"/><circle cx="16.9" cy="8.3" r="0.9" fill="#806020"/><circle cx="16.9" cy="12.6" r="0.9" fill="#806020"/><circle cx="16.9" cy="16.9" r="0.9" fill="#806020"/></svg>
<div class="a" style="left:103px;top:447px;width:52px;height:1px;background:#cfcfcf"></div>
<svg class="a" style="left:106px;top:456px" width="23" height="19" viewBox="0 0 23 19"><path d="M1 4 L20 4" stroke="#555" stroke-width="1" stroke-dasharray="3 1.5"/><path d="M9 0 L9 9 M5 4 L13 4" stroke="#2a70c0" stroke-width="1.3"/><path d="M11 7 L11 17 L13.5 14.5 L16 19 L17.5 18 L15 13.8 L18.5 13.8 Z" fill="#fff" stroke="#222" stroke-width="1"/><path d="M20 18 L23 18 L23 15 Z" fill="#222"/></svg>
<svg class="a" style="left:132px;top:456px" width="22" height="19" viewBox="0 0 22 19"><path d="M2 1 L7 1 L7 10 L18 10 L18 16 L2 16 Z" fill="#f0d070" stroke="#806020" stroke-width="1"/><circle cx="10" cy="13" r="2" fill="none" stroke="#c02020" stroke-width="0.9"/><path d="M19 18 L22 18 L22 15 Z" fill="#222"/></svg>
<svg class="a" style="left:107px;top:478px" width="22" height="21" viewBox="0 0 22 21"><path d="M1 6 L5 2 L9 2 L9 17 L1 17 Z" fill="#f0d070" stroke="#806020" stroke-width="0.9"/><rect x="9" y="9" width="10" height="9" fill="#f0c060" stroke="#806020" stroke-width="0.9"/><circle cx="14" cy="13.5" r="3" fill="#f08040" stroke="#c02020" stroke-width="0.8"/><path d="M20 19 L23 19 L23 16 Z" fill="#222"/></svg>
<svg class="a" style="left:132px;top:477px" width="23" height="22" viewBox="0 0 23 22"><path d="M2 1 L7 1 L7 10 L15 10 L15 17 L2 17 Z" fill="#f0d070" stroke="#806020" stroke-width="1"/><circle cx="16" cy="17" r="2.2" fill="none" stroke="#c02020" stroke-width="1.2"/><circle cx="20" cy="15" r="2.2" fill="none" stroke="#c02020" stroke-width="1.2"/><path d="M10 10 L17 17 M14 8 L19 15" stroke="#c02020" stroke-width="0.9"/></svg>
<div class="a" style="left:103px;top:502px;width:52px;height:1px;background:#cfcfcf"></div>
<svg class="a" style="left:106px;top:512px" width="23" height="19" viewBox="0 0 23 19"><text x="0.5" y="7" font-size="7.5" font-weight="bold" font-family="Liberation Sans" fill="#222">(XYZ)</text><path d="M11 10 L11 18 M7 14 L15 14" stroke="#2a70c0" stroke-width="1.4"/><path d="M20 18 L23 18 L23 15 Z" fill="#222"/></svg>
<svg class="a" style="left:132px;top:510px" width="23" height="21" viewBox="0 0 23 21"><path d="M10 3 L10 13 L3 18 M10 13 L17 18" fill="none" stroke="#1a3a7a" stroke-width="1.4"/><path d="M8 4 L10 0 L12 4 Z" fill="#2a70c0"/><circle cx="10" cy="13" r="1.5" fill="#1a3a7a"/><path d="M20 20 L23 20 L23 17 Z" fill="#222"/></svg>
<svg class="a" style="left:106px;top:535px" width="24" height="19" viewBox="0 0 24 19"><path d="M5 2 L5 9 L1 12 M5 9 L10 11" stroke="#222" stroke-width="1"/><path d="M1 16 L12 16" stroke="#222" stroke-width="1.1"/><path d="M0 16 L3 14 L3 18 Z M13 16 L10 14 L10 18 Z" fill="#222"/><path d="M14 5 L21 2 L19 14 L12 17 Z" fill="#f0d070" stroke="#806020" stroke-width="0.8"/><path d="M21 18 L24 18 L24 15 Z" fill="#222"/></svg>
<svg class="a" style="left:132px;top:533px" width="23" height="21" viewBox="0 0 23 21"><path d="M10 2 L10 13 L3 18 M10 13 L17 18" fill="none" stroke="#2a70c0" stroke-width="1.1" stroke-dasharray="1.5 1.2"/><circle cx="10" cy="4" r="1.2" fill="#c02020"/><circle cx="10" cy="13" r="1.4" fill="#c02020"/><circle cx="16" cy="17" r="1.2" fill="#c02020"/><path d="M20 20 L23 20 L23 17 Z" fill="#222"/></svg>
<div class="a" style="left:98px;top:646px;width:1182px;height:33px;background:linear-gradient(#fdfdfd,#ededed)"></div>
<div class="a" style="left:108px;top:650px;width:17px;height:19px;background:#d6d6d6;border:1px solid #c4c4c4"></div>
<svg class="a" style="left:110px;top:654px" width="13" height="11" viewBox="0 0 13 11"><path d="M0.5 5.5 L5 1 L5 4 L12 4 L12 7 L5 7 L5 10 Z" fill="#b0b0b0"/></svg>
<div class="a" style="left:128px;top:650px;width:17px;height:19px;background:#e4e4e4;border:1px solid #c4c4c4"></div>
<svg class="a" style="left:130px;top:654px" width="13" height="12" viewBox="0 0 13 12"><path d="M1.5 1 L11.5 11 M11.5 1 L1.5 11" stroke="#d81818" stroke-width="1.6"/></svg>
<div class="a" style="left:150.30px;top:655.52px;font-size:11.2px;line-height:11.2px;color:#262626;font-weight:normal;font-family:'Liberation Sans',sans-serif;white-space:pre;transform:scaleX(0.9097);transform-origin:0 0;">Select the regions to be assigned a section</div>
<div class="a" style="left:352.00px;top:655.52px;font-size:11.2px;line-height:11.2px;color:#262626;font-weight:normal;font-family:'Liberation Sans',sans-serif;white-space:pre;transform:scaleX(1.0661);transform-origin:0 0;">(</div>
<div class="a" style="left:361px;top:654px;width:13px;height:13px;background:#fff;border:1px solid #444"></div>
<svg class="a" style="left:363px;top:656px" width="9" height="9" viewBox="0 0 9 9"><path d="M1 4.5 L3.5 7.5 L8 1" fill="none" stroke="#222" stroke-width="1.3"/></svg>
<div class="a" style="left:377.00px;top:655.52px;font-size:11.2px;line-height:11.2px;color:#262626;font-weight:normal;font-family:'Liberation Sans',sans-serif;white-space:pre;transform:scaleX(0.8764);transform-origin:0 0;">Create set:</div>
<div class="a" style="left:430px;top:651px;width:60px;height:19px;background:#fff;border:1px solid #bcbcbc"></div>
<div class="a" style="left:432px;top:654px;width:25px;height:13px;background:#3079d6"></div>
<div class="a" style="left:433.00px;top:655.52px;font-size:11.2px;line-height:11.2px;color:#fff;font-weight:normal;font-family:'Liberation Sans',sans-serif;white-space:pre;transform:scaleX(0.8592);transform-origin:0 0;">Set-2</div>
<div class="a" style="left:494.00px;top:655.52px;font-size:11.2px;line-height:11.2px;color:#262626;font-weight:normal;font-family:'Liberation Sans',sans-serif;white-space:pre;transform:scaleX(1.0661);transform-origin:0 0;">)</div>
<div class="a" style="left:505px;top:651px;width:29px;height:19px;background:#e6eef8;border:2px solid #3a80d0"></div>
<div class="a" style="left:508.00px;top:655.52px;font-size:11.2px;line-height:11.2px;color:#262626;font-weight:normal;font-family:'Liberation Sans',sans-serif;white-space:pre;transform:scaleX(0.8592);transform-origin:0 0;">Done</div>
<div class="a" style="left:1166px;top:650px;width:31px;height:19px;background:#e2e2e2;border:1px solid #aeaeae"></div>
<div class="a" style="left:1169.00px;top:655.86px;font-size:10.8px;line-height:10.8px;color:#262626;font-weight:normal;font-family:'Liberation Sans',sans-serif;white-space:pre;transform:scaleX(0.8492);transform-origin:0 0;">Sets...</div>
<svg class="a" style="left:1218px;top:649px" width="62" height="24" viewBox="0 0 62 24"><g fill="none" stroke="#218a78" stroke-linecap="round"><path d="M8.5 3.5 Q12 1.5 14 3.5 Q14.5 6 10 8.5" stroke-width="1.8"/><path d="M3 21 L7 13 Q9 11.5 12 12 Q13 14 10 17 Q7 19.5 3 21" stroke-width="1.6"/><path d="M19 9.5 L13.5 9.5 Q11 10 12.5 12.5 L16.5 15.5 Q18 18 15.5 18.5 L9.5 18.5" stroke-width="1.7"/><path d="M31.5 11.5 L26 11.5 Q24 12 25.5 14 L29 16 Q30 18.5 27.5 18.5 L23 18.5" stroke-width="1.9"/><path d="M38 11 L36.5 18.5" stroke-width="1.9"/><path d="M40.5 18.5 L42 11 L46.5 17 L51 11 L50 18.5" stroke-width="1.9" stroke-linejoin="round"/><path d="M56 11 L54.8 16.5 Q55 18.5 58 18.5 L62 18.5" stroke-width="1.9"/></g></svg>
<svg class="a" style="left:210px;top:550px" width="80" height="75" viewBox="0 0 80 75"><text x="34" y="16" font-size="12" font-family="Liberation Sans" fill="#fff">Y</text><text x="3" y="69" font-size="12" font-family="Liberation Sans" fill="#fff">Z</text><text x="66" y="69" font-size="12" font-family="Liberation Sans" fill="#fff">X</text><path d="M39 48 L39 32" stroke="#20a020" stroke-width="3"/><path d="M34.5 34 L39 24 L43.5 34 Z" fill="#20c020"/><path d="M39 48 L56 56" stroke="#c01818" stroke-width="3"/><path d="M52 51 L62 58.5 L50.5 59 Z" fill="#d01818"/><path d="M39 48 L24 55" stroke="#1818c0" stroke-width="3"/><path d="M27 51 L17 58.5 L29 59 Z" fill="#1818d0"/></svg>
<svg class="a" style="left:1165px;top:140px" width="90" height="105" viewBox="0 0 90 105"><text x="40" y="11.5" font-size="10" font-family="Liberation Sans" fill="#d8d870">Y</text><text x="5" y="81" font-size="10" font-family="Liberation Sans" fill="#d8d870">Z</text><text x="73" y="81" font-size="10" font-family="Liberation Sans" fill="#d8d870">X</text><path d="M43.5 27 Q20 42 17.5 73 L43.5 59 Z" fill="#1d5c68" stroke="#dcdcf4" stroke-width="1.6" stroke-linejoin="round"/><path d="M43.5 27 Q67 42 69.5 73 L43.5 59 Z" fill="#1d5c68" stroke="#dcdcf4" stroke-width="1.6" stroke-linejoin="round"/><path d="M43.5 68 L15.5 82 Q18 96 43.5 99 Q69 96 71.5 82 Z" fill="#1d5c68" stroke="#dcdcf4" stroke-width="1.6" stroke-linejoin="round"/><path d="M43.5 20 L43.5 80" stroke="#dcdcf4" stroke-width="1.6"/><circle cx="43.5" cy="18.5" r="3.2" fill="#e4d4f4"/><rect x="40.5" y="79" width="7" height="8" fill="#e01010"/></svg>
</body></html>
